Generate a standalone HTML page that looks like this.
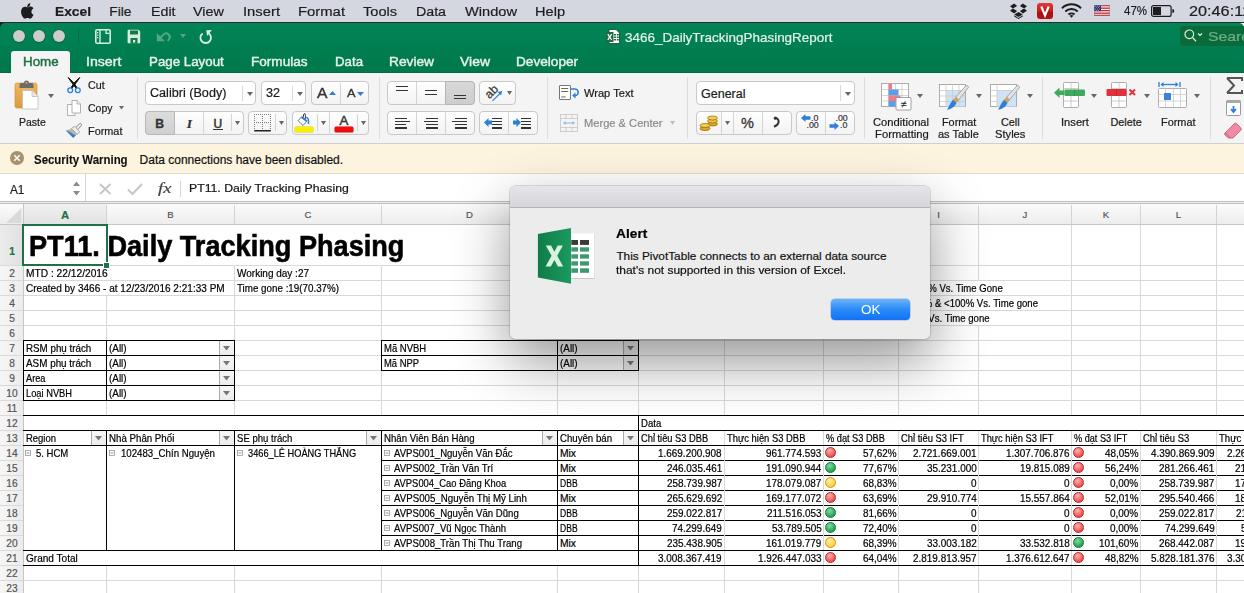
<!DOCTYPE html>
<html><head><meta charset="utf-8"><style>
html,body{margin:0;padding:0;}
body{width:1244px;height:593px;overflow:hidden;position:relative;background:#fff;font-family:"Liberation Sans", sans-serif;}
svg{position:absolute;overflow:visible;}
</style></head><body>
<div style="position:absolute;left:0px;top:0px;width:1244px;height:22px;background:#d4d7df;"></div>
<div style="position:absolute;left:0px;top:22px;width:1244px;height:1px;background:#2b2b2b;"></div>
<svg style="left:20px;top:3px" width="15" height="17" viewBox="0 0 170 200"><path fill="#1d1d1f" d="M150 68c-1 1-19 11-19 34 0 26 23 35 24 35 0 1-4 13-12 25-8 11-16 22-28 22s-15-7-29-7c-14 0-19 7-30 7-11 0-19-10-28-23C18 146 9 122 9 99c0-37 24-56 47-56 12 0 23 8 30 8 7 0 19-9 33-9 5 0 24 0 37 19zM107 34c6-7 10-16 10-26 0-1 0-3 0-4-10 0-21 7-27 14-5 6-10 15-10 25 0 1 0 3 0 3 1 0 2 0 3 0 9 0 19-6 24-12z"/></svg>
<div style="position:absolute;left:54.50px;top:5.00px;font-size:13.7px;line-height:1;font-weight:bold;color:#1d1d1f;white-space:pre;-webkit-text-stroke:0.2px #1d1d1f;transform:scaleX(1.0065);transform-origin:0 0;">Excel</div>
<div style="position:absolute;left:109.30px;top:5.00px;font-size:13.7px;line-height:1;color:#1d1d1f;white-space:pre;-webkit-text-stroke:0.2px #1d1d1f;">File</div>
<div style="position:absolute;left:150.50px;top:5.00px;font-size:13.7px;line-height:1;color:#1d1d1f;white-space:pre;-webkit-text-stroke:0.2px #1d1d1f;transform:scaleX(1.0388);transform-origin:0 0;">Edit</div>
<div style="position:absolute;left:193.40px;top:5.00px;font-size:13.7px;line-height:1;color:#1d1d1f;white-space:pre;-webkit-text-stroke:0.2px #1d1d1f;transform:scaleX(1.0537);transform-origin:0 0;">View</div>
<div style="position:absolute;left:243.00px;top:5.00px;font-size:13.7px;line-height:1;color:#1d1d1f;white-space:pre;-webkit-text-stroke:0.2px #1d1d1f;transform:scaleX(1.0809);transform-origin:0 0;">Insert</div>
<div style="position:absolute;left:298.40px;top:5.00px;font-size:13.7px;line-height:1;color:#1d1d1f;white-space:pre;-webkit-text-stroke:0.2px #1d1d1f;transform:scaleX(1.0842);transform-origin:0 0;">Format</div>
<div style="position:absolute;left:363.00px;top:5.00px;font-size:13.7px;line-height:1;color:#1d1d1f;white-space:pre;-webkit-text-stroke:0.2px #1d1d1f;transform:scaleX(1.0641);transform-origin:0 0;">Tools</div>
<div style="position:absolute;left:416.00px;top:5.00px;font-size:13.7px;line-height:1;color:#1d1d1f;white-space:pre;-webkit-text-stroke:0.2px #1d1d1f;transform:scaleX(1.0376);transform-origin:0 0;">Data</div>
<div style="position:absolute;left:465.00px;top:5.00px;font-size:13.7px;line-height:1;color:#1d1d1f;white-space:pre;-webkit-text-stroke:0.2px #1d1d1f;transform:scaleX(1.0682);transform-origin:0 0;">Window</div>
<div style="position:absolute;left:535.00px;top:5.00px;font-size:13.7px;line-height:1;color:#1d1d1f;white-space:pre;-webkit-text-stroke:0.2px #1d1d1f;transform:scaleX(1.0657);transform-origin:0 0;">Help</div>
<svg style="left:1010px;top:3px" width="17" height="16" viewBox="0 0 17 16"><g fill="#1d1d1f"><path d="M4.2 0.5L0 3.2 2.9 5.5 7.1 3 z"/><path d="M12.8 0.5L17 3.2 14.1 5.5 9.9 3 z"/><path d="M0 7.8L4.2 10.5 7.1 8 2.9 5.5z"/><path d="M17 7.8L12.8 10.5 9.9 8 14.1 5.5z"/><path d="M4.3 11.4L8.5 14 12.7 11.4 8.5 8.9z"/><path d="M4.2 12.3v1.2l4.3 2.5 4.3-2.5v-1.2l-4.3 2.6z"/></g></svg>
<div style="position:absolute;left:1037px;top:3px;width:16px;height:16px;background:linear-gradient(#e23a3a,#c21a1a 55%,#a80f0f 56%,#b51515);border-radius:3px;"></div>
<svg style="left:1037px;top:3px" width="16" height="16" viewBox="0 0 16 16"><path d="M4.3 3.5L8 12.5 11.7 3.5" stroke="#fff" stroke-width="2.1" fill="none"/></svg>
<svg style="left:1061px;top:3px" width="21" height="15" viewBox="0 0 21 15"><g fill="none" stroke="#1d1d1f" stroke-width="2" stroke-linecap="butt"><path d="M1 5.2A13.5 13.5 0 0 1 20 5.2"/><path d="M4.3 8.5A9 9 0 0 1 16.7 8.5"/><path d="M7.5 11.6A4.4 4.4 0 0 1 13.5 11.6"/></g><path d="M8.6 12.8L10.5 14.8 12.4 12.8A2.8 2.8 0 0 0 8.6 12.8z" fill="#1d1d1f"/></svg>
<svg style="left:1094px;top:5px" width="16" height="11" viewBox="0 0 16 11"><rect width="16" height="11" fill="#fff"/><g fill="#c8202a"><rect y="0" width="16" height="1.3"/><rect y="2.5" width="16" height="1.3"/><rect y="5" width="16" height="1.3"/><rect y="7.5" width="16" height="1.3"/><rect y="9.7" width="16" height="1.3"/></g><rect width="7" height="6.2" fill="#2b2f6e"/><g fill="#fff"><circle cx="1.3" cy="1.2" r=".45"/><circle cx="3.3" cy="1.2" r=".45"/><circle cx="5.3" cy="1.2" r=".45"/><circle cx="2.3" cy="2.6" r=".45"/><circle cx="4.3" cy="2.6" r=".45"/><circle cx="1.3" cy="4" r=".45"/><circle cx="3.3" cy="4" r=".45"/><circle cx="5.3" cy="4" r=".45"/><circle cx="2.3" cy="5.3" r=".45"/><circle cx="4.3" cy="5.3" r=".45"/></g><rect x=".25" y=".25" width="15.5" height="10.5" fill="none" stroke="#888" stroke-width=".5"/></svg>
<div style="position:absolute;left:1123.50px;top:5.00px;font-size:12.8px;line-height:1;color:#1d1d1f;white-space:pre;-webkit-text-stroke:0.2px #1d1d1f;transform:scaleX(0.8980);transform-origin:0 0;">47%</div>
<svg style="left:1151px;top:5px" width="24" height="12" viewBox="0 0 24 12"><rect x="0.6" y="0.6" width="19.5" height="10.8" rx="2" fill="none" stroke="#1d1d1f" stroke-width="1.2"/><rect x="2" y="2" width="8" height="8" fill="#1d1d1f"/><path d="M21.3 4v4a2 2 0 0 0 0-4z" fill="#1d1d1f"/></svg>
<div style="position:absolute;left:1188.70px;top:4.00px;font-size:14px;line-height:1;color:#1d1d1f;white-space:pre;-webkit-text-stroke:0.2px #1d1d1f;transform:scaleX(1.1598);transform-origin:0 0;">20:46:11</div>
<div style="position:absolute;left:0px;top:23px;width:8px;height:8px;background:#1a1a1a;"></div>
<div style="position:absolute;left:0px;top:23px;width:1244px;height:50px;background:linear-gradient(#018457,#00784b);border-radius:5px 5px 0 0;"></div>
<div style="position:absolute;left:0px;top:72px;width:1244px;height:1px;background:#006a40;"></div>
<div style="position:absolute;left:13px;top:30px;width:12px;height:12px;background:#cccccc;border-radius:50%;box-shadow:0 0 0 .6px rgba(0,60,30,.5);"></div>
<div style="position:absolute;left:33px;top:30px;width:12px;height:12px;background:#cccccc;border-radius:50%;box-shadow:0 0 0 .6px rgba(0,60,30,.5);"></div>
<div style="position:absolute;left:53px;top:30px;width:12px;height:12px;background:#cccccc;border-radius:50%;box-shadow:0 0 0 .6px rgba(0,60,30,.5);"></div>
<div style="position:absolute;left:78px;top:28px;width:1px;height:16px;background:rgba(0,0,0,0.12);"></div>
<svg style="left:95px;top:29px" width="16" height="15" viewBox="0 0 16 15"><rect x=".8" y=".8" width="14.4" height="13.4" rx="1.3" fill="none" stroke="#d9ece0" stroke-width="1.6"/><rect x="4.3" y="1" width="1.4" height="13" fill="#d9ece0"/><g fill="#d9ece0"><rect x="2" y="3" width="1.3" height="1.2"/><rect x="2" y="5.5" width="1.3" height="1.2"/><rect x="2" y="8" width="1.3" height="1.2"/></g><path d="M11 1v3.3h3.3" fill="none" stroke="#d9ece0" stroke-width="1.3"/></svg>
<svg style="left:127px;top:29px" width="14" height="15" viewBox="0 0 14 15"><path d="M1.5 .8h10l1.7 1.7v11a.8.8 0 0 1-.8.8h-11a.8.8 0 0 1-.8-.8v-12a.8.8 0 0 1 .9-.7z" fill="#d9ece0"/><rect x="3" y="1.5" width="8" height="4" fill="#0e7d45"/><rect x="3.5" y="9" width="7" height="5.5" fill="#0e7d45"/><rect x="6" y="11" width="2.2" height="2.5" fill="#d9ece0"/></svg>
<svg style="left:156px;top:31px" width="15" height="12" viewBox="0 0 15 12"><path d="M4.5 6.5L7.5 3.6a3.6 3.6 0 0 1 5.6 4.5L11.8 10" fill="none" stroke="#56a882" stroke-width="1.9"/><path d="M.8 2v8.2h8.2z" fill="#56a882"/></svg>
<svg style="left:180px;top:34px" width="6" height="4" viewBox="0 0 6 4"><path d="M0 0h6L3 4z" fill="#5ba37c"/></svg>
<svg style="left:199px;top:29px" width="15" height="16" viewBox="0 0 15 16"><path d="M3.6 4.4A5.3 5.3 0 1 0 9.5 4.2" fill="none" stroke="#dcede3" stroke-width="1.8"/><path d="M7.3 1.2L12.9 1 8 6.9z" fill="#dcede3"/></svg>
<svg style="left:606px;top:29px" width="14" height="15" viewBox="0 0 14 15"><path d="M3 .5h7l3.5 3.5v10.5h-10.5z" fill="#fff" stroke="#0a4a2a" stroke-width=".8"/><g fill="#217346"><rect x="8" y="5" width="2" height="1.5"/><rect x="10.8" y="5" width="2" height="1.5"/><rect x="8" y="7.5" width="2" height="1.5"/><rect x="10.8" y="7.5" width="2" height="1.5"/><rect x="8" y="10" width="2" height="1.5"/><rect x="10.8" y="10" width="2" height="1.5"/></g><path d="M0 3h7.5v10h-7.5z" fill="#1d6b40"/><path d="M1.8 5.2l3.8 5.6M5.6 5.2l-3.8 5.6" stroke="#fff" stroke-width="1.2"/></svg>
<div style="position:absolute;left:624.50px;top:31.00px;font-size:13px;line-height:1;color:#e6f1ea;white-space:pre;-webkit-text-stroke:0.2px #e6f1ea;transform:scaleX(1.0354);transform-origin:0 0;">3466_DailyTrackingPhasingReport</div>
<div style="position:absolute;left:1180px;top:26px;width:70px;height:20px;background:#0a6a3a;border-radius:3px;"></div>
<svg style="left:1184px;top:29px" width="20" height="14" viewBox="0 0 20 14"><circle cx="5.3" cy="5.3" r="4.3" fill="none" stroke="#dfeee5" stroke-width="1.2"/><path d="M8.4 8.4l3.6 3.8" stroke="#dfeee5" stroke-width="1.3"/><path d="M14 4.5l2 2 2-2" fill="none" stroke="#dfeee5" stroke-width="1.1"/></svg>
<div style="position:absolute;left:1208.00px;top:30.00px;font-size:13px;line-height:1;color:#6fae8a;white-space:pre;-webkit-text-stroke:0.2px #6fae8a;transform:scaleX(1.2139);transform-origin:0 0;">Search</div>
<div style="position:absolute;left:11px;top:51px;width:59px;height:22px;background:#f4f4f4;border-radius:3px 3px 0 0;"></div>
<div style="position:absolute;left:22.60px;top:55.00px;font-size:13px;line-height:1;color:#1e7145;white-space:pre;-webkit-text-stroke:0.2px #1e7145;transform:scaleX(1.0266);transform-origin:0 0;-webkit-text-stroke:0.45px #1e7145;">Home</div>
<div style="position:absolute;left:85.50px;top:55.00px;font-size:13px;line-height:1;color:#e7f1eb;white-space:pre;-webkit-text-stroke:0.2px #e7f1eb;transform:scaleX(1.0857);transform-origin:0 0;-webkit-text-stroke:0.4px #e7f1eb;">Insert</div>
<div style="position:absolute;left:148.70px;top:55.00px;font-size:13px;line-height:1;color:#e7f1eb;white-space:pre;-webkit-text-stroke:0.2px #e7f1eb;transform:scaleX(1.0246);transform-origin:0 0;-webkit-text-stroke:0.4px #e7f1eb;">Page Layout</div>
<div style="position:absolute;left:251.40px;top:55.00px;font-size:13px;line-height:1;color:#e7f1eb;white-space:pre;-webkit-text-stroke:0.2px #e7f1eb;transform:scaleX(1.0447);transform-origin:0 0;-webkit-text-stroke:0.4px #e7f1eb;">Formulas</div>
<div style="position:absolute;left:335.40px;top:55.00px;font-size:13px;line-height:1;color:#e7f1eb;white-space:pre;-webkit-text-stroke:0.2px #e7f1eb;transform:scaleX(1.0197);transform-origin:0 0;-webkit-text-stroke:0.4px #e7f1eb;">Data</div>
<div style="position:absolute;left:389.00px;top:55.00px;font-size:13px;line-height:1;color:#e7f1eb;white-space:pre;-webkit-text-stroke:0.2px #e7f1eb;transform:scaleX(1.0557);transform-origin:0 0;-webkit-text-stroke:0.4px #e7f1eb;">Review</div>
<div style="position:absolute;left:460.10px;top:55.00px;font-size:13px;line-height:1;color:#e7f1eb;white-space:pre;-webkit-text-stroke:0.2px #e7f1eb;transform:scaleX(1.0736);transform-origin:0 0;-webkit-text-stroke:0.4px #e7f1eb;">View</div>
<div style="position:absolute;left:516.40px;top:55.00px;font-size:13px;line-height:1;color:#e7f1eb;white-space:pre;-webkit-text-stroke:0.2px #e7f1eb;transform:scaleX(1.0480);transform-origin:0 0;-webkit-text-stroke:0.4px #e7f1eb;">Developer</div>
<div style="position:absolute;left:0px;top:73px;width:1244px;height:70px;background:#f4f4f4;"></div>
<div style="position:absolute;left:0px;top:143px;width:1244px;height:1px;background:#cfcfcf;"></div>
<div style="position:absolute;left:137px;top:77px;width:1px;height:62px;background:#dcdcdc;"></div>
<div style="position:absolute;left:379px;top:77px;width:1px;height:62px;background:#dcdcdc;"></div>
<div style="position:absolute;left:547px;top:77px;width:1px;height:62px;background:#dcdcdc;"></div>
<div style="position:absolute;left:687px;top:77px;width:1px;height:62px;background:#dcdcdc;"></div>
<div style="position:absolute;left:864px;top:77px;width:1px;height:62px;background:#dcdcdc;"></div>
<div style="position:absolute;left:1042px;top:77px;width:1px;height:62px;background:#dcdcdc;"></div>
<div style="position:absolute;left:1210px;top:77px;width:1px;height:62px;background:#dcdcdc;"></div>
<svg style="left:14px;top:79px" width="26" height="32" viewBox="0 0 26 32">
<defs><linearGradient id="cbg" x1="0" y1="0" x2="0" y2="1"><stop offset="0" stop-color="#f0b860"/><stop offset="1" stop-color="#dc9a3c"/></linearGradient></defs>
<rect x="1" y="4" width="22" height="25" rx="2" fill="url(#cbg)" stroke="#c98a30" stroke-width=".6"/>
<path d="M5.5 9v-3a2 2 0 0 1 2-2h2.5a2.5 2.5 0 0 1 5 0h2.5a2 2 0 0 1 2 2v3z" fill="#6b6b6b"/>
<circle cx="12.5" cy="4" r="1" fill="#e0a850"/>
<path d="M8.5 11.5h9.5l6 6v12.5h-15.5z" fill="#fff" stroke="#bdbdbd" stroke-width=".8"/>
<path d="M18 11.5v6h6" fill="#e8e8e8" stroke="#bdbdbd" stroke-width=".8"/>
</svg>
<svg style="left:48px;top:94px" width="6" height="4" viewBox="0 0 6 4"><path d="M0 0h6L3 4z" fill="#666"/></svg>
<div style="position:absolute;left:18.70px;top:117.00px;font-size:10.8px;line-height:1;color:#1a1a1a;white-space:pre;-webkit-text-stroke:0.2px #1a1a1a;transform:scaleX(0.9707);transform-origin:0 0;">Paste</div>
<svg style="left:66px;top:76px" width="16" height="18" viewBox="0 0 16 18">
<path d="M2.2 1.5Q5 6 10 12.2L11 11.5Q7 5 2.2 1.5z" fill="#111" stroke="#111" stroke-width="1"/>
<path d="M13.8 1.5Q11 6 6 12.2L5 11.5Q9 5 13.8 1.5z" fill="#111" stroke="#111" stroke-width="1"/>
<circle cx="4.2" cy="14.3" r="2.4" fill="none" stroke="#2a7fd8" stroke-width="1.3"/>
<circle cx="11.8" cy="14.3" r="2.4" fill="none" stroke="#2a7fd8" stroke-width="1.3"/>
</svg>
<div style="position:absolute;left:87.50px;top:80.00px;font-size:10.8px;line-height:1;color:#1a1a1a;white-space:pre;-webkit-text-stroke:0.2px #1a1a1a;transform:scaleX(0.9880);transform-origin:0 0;">Cut</div>
<svg style="left:66px;top:99px" width="16" height="18" viewBox="0 0 16 18">
<path d="M1.5 5.5h5l2.5 2.5v8.5h-7.5z" fill="#fff" stroke="#a8a8a8" stroke-width=".9"/>
<path d="M6 1.5h5l3.5 3.5v9h-8.5z" fill="#fff" stroke="#a8a8a8" stroke-width=".9"/>
<path d="M11 1.5v3.5h3.5" fill="#eee" stroke="#a8a8a8" stroke-width=".9"/>
</svg>
<div style="position:absolute;left:87.50px;top:103.00px;font-size:10.8px;line-height:1;color:#1a1a1a;white-space:pre;-webkit-text-stroke:0.2px #1a1a1a;transform:scaleX(0.9760);transform-origin:0 0;">Copy</div>
<svg style="left:119px;top:106px" width="5" height="4" viewBox="0 0 5 4"><path d="M0 0h5L2.5 3.6z" fill="#666"/></svg>
<svg style="left:64px;top:121px" width="20" height="19" viewBox="0 0 20 19">
<path d="M16.2 3.9L12.8 7.6" stroke="#8a8a8a" stroke-width="3.4" stroke-linecap="round"/>
<path d="M16.2 3.9L12.8 7.6" stroke="#efefef" stroke-width="2" stroke-linecap="round"/>
<path d="M7.4 7.4L10.6 5.1 15.8 10.8 13.3 13.4z" fill="#ececec" stroke="#8a8a8a" stroke-width=".7"/>
<path d="M2.6 9.4L7.4 7.4 13.3 13.4 11.6 14.8z" fill="#c7b29a"/>
<path d="M2 9.8L2.8 9.2 11.8 14.6 9.2 17z" fill="#2f80d6"/>
</svg>
<div style="position:absolute;left:87.50px;top:126.00px;font-size:10.8px;line-height:1;color:#1a1a1a;white-space:pre;-webkit-text-stroke:0.2px #1a1a1a;transform:scaleX(1.0060);transform-origin:0 0;">Format</div>
<div style="position:absolute;left:145px;top:81px;width:111px;height:24px;background:#fff;border:1px solid #c9c9c9;border-radius:4px;box-sizing:border-box;"></div>
<div style="position:absolute;left:242px;top:86px;width:1px;height:15px;background:#dadada;"></div>
<svg style="left:246.5px;top:92px" width="6" height="4" viewBox="0 0 6 4"><path d="M0 0h6L3.0 4z" fill="#666"/></svg>
<div style="position:absolute;left:150.10px;top:87.00px;font-size:12.3px;line-height:1;color:#1a1a1a;white-space:pre;-webkit-text-stroke:0.2px #1a1a1a;transform:scaleX(1.0257);transform-origin:0 0;">Calibri (Body)</div>
<div style="position:absolute;left:261px;top:81px;width:45px;height:24px;background:#fff;border:1px solid #c9c9c9;border-radius:4px;box-sizing:border-box;"></div>
<div style="position:absolute;left:292px;top:86px;width:1px;height:15px;background:#dadada;"></div>
<svg style="left:296.5px;top:92px" width="6" height="4" viewBox="0 0 6 4"><path d="M0 0h6L3.0 4z" fill="#666"/></svg>
<div style="position:absolute;left:266.30px;top:87.00px;font-size:12.3px;line-height:1;color:#1a1a1a;white-space:pre;-webkit-text-stroke:0.2px #1a1a1a;transform:scaleX(1.0235);transform-origin:0 0;">32</div>
<div style="position:absolute;left:311px;top:81px;width:58px;height:24px;background:linear-gradient(#fefefe,#f3f3f3);border:1px solid #c9c9c9;border-radius:4px;box-sizing:border-box;"></div>
<div style="position:absolute;left:340px;top:83px;width:1px;height:21px;background:#d4d4d4;"></div>
<div style="position:absolute;left:316.50px;top:86.00px;font-size:14px;line-height:1;color:#333;white-space:pre;-webkit-text-stroke:0.2px #333;transform:scaleX(1.1245);transform-origin:0 0;-webkit-text-stroke:0.35px #333;">A</div>
<svg style="left:329px;top:91px" width="7" height="4" viewBox="0 0 7 4"><path d="M0 4h7L3.5 0z" fill="#2d7fd8"/></svg>
<div style="position:absolute;left:346.50px;top:88.00px;font-size:11.8px;line-height:1;color:#333;white-space:pre;-webkit-text-stroke:0.2px #333;transform:scaleX(1.0803);transform-origin:0 0;-webkit-text-stroke:0.3px #333;">A</div>
<svg style="left:357px;top:92px" width="7" height="4" viewBox="0 0 7 4"><path d="M0 0h7L3.5 4z" fill="#2d7fd8"/></svg>
<div style="position:absolute;left:145px;top:111px;width:99px;height:24px;background:linear-gradient(#fefefe,#f3f3f3);border:1px solid #c9c9c9;border-radius:4px;box-sizing:border-box;"></div>
<div style="position:absolute;left:145px;top:111px;width:30px;height:24px;background:linear-gradient(#dcdcdc,#d0d0d0);border:1px solid #b8b8b8;border-radius:4px 0 0 4px;box-sizing:border-box;"></div>
<div style="position:absolute;left:203px;top:112px;width:1px;height:22px;background:#d4d4d4;"></div>
<div style="position:absolute;left:231px;top:114px;width:1px;height:17px;background:#d4d4d4;"></div>
<div style="position:absolute;left:155.30px;top:118.00px;font-size:12.2px;line-height:1;font-weight:bold;color:#333;white-space:pre;-webkit-text-stroke:0.2px #333;-webkit-text-stroke:0.3px #333;">B</div>
<div style="position:absolute;left:186.82px;top:117.00px;font-size:13.5px;line-height:1;font-weight:bold;color:#333;white-space:pre;-webkit-text-stroke:0.2px #333;font-family:'Liberation Serif',serif;font-style:italic;">I</div>
<div style="position:absolute;left:213.47px;top:118.00px;font-size:12px;line-height:1;color:#333;white-space:pre;-webkit-text-stroke:0.2px #333;-webkit-text-stroke:0.5px #333;">U</div>
<div style="position:absolute;left:213px;top:129px;width:10px;height:1.2px;background:#333;"></div>
<svg style="left:235px;top:121px" width="5" height="4" viewBox="0 0 5 4"><path d="M0 0h5L2.5 4z" fill="#666"/></svg>
<div style="position:absolute;left:248px;top:111px;width:39px;height:24px;background:linear-gradient(#fefefe,#f3f3f3);border:1px solid #c9c9c9;border-radius:4px;box-sizing:border-box;"></div>
<div style="position:absolute;left:275px;top:114px;width:1px;height:17px;background:#d4d4d4;"></div>
<svg style="left:254px;top:114px" width="17" height="18" viewBox="0 0 17 18"><g fill="#7a7a7a"><rect x="0" y="0" width="1" height="1"/><rect x="0" y="2" width="1" height="1"/><rect x="0" y="4" width="1" height="1"/><rect x="0" y="6" width="1" height="1"/><rect x="0" y="8" width="1" height="1"/><rect x="0" y="10" width="1" height="1"/><rect x="0" y="12" width="1" height="1"/><rect x="0" y="14" width="1" height="1"/><rect x="2" y="0" width="1" height="1"/><rect x="2" y="8" width="1" height="1"/><rect x="4" y="0" width="1" height="1"/><rect x="4" y="8" width="1" height="1"/><rect x="6" y="0" width="1" height="1"/><rect x="6" y="8" width="1" height="1"/><rect x="8" y="0" width="1" height="1"/><rect x="8" y="2" width="1" height="1"/><rect x="8" y="4" width="1" height="1"/><rect x="8" y="6" width="1" height="1"/><rect x="8" y="8" width="1" height="1"/><rect x="8" y="10" width="1" height="1"/><rect x="8" y="12" width="1" height="1"/><rect x="8" y="14" width="1" height="1"/><rect x="10" y="0" width="1" height="1"/><rect x="10" y="8" width="1" height="1"/><rect x="12" y="0" width="1" height="1"/><rect x="12" y="8" width="1" height="1"/><rect x="14" y="0" width="1" height="1"/><rect x="14" y="8" width="1" height="1"/><rect x="16" y="0" width="1" height="1"/><rect x="16" y="2" width="1" height="1"/><rect x="16" y="4" width="1" height="1"/><rect x="16" y="6" width="1" height="1"/><rect x="16" y="8" width="1" height="1"/><rect x="16" y="10" width="1" height="1"/><rect x="16" y="12" width="1" height="1"/><rect x="16" y="14" width="1" height="1"/></g><rect x="0" y="16" width="17" height="1.5" rx=".7" fill="#222"/></svg>
<svg style="left:278.5px;top:121px" width="5" height="4" viewBox="0 0 5 4"><path d="M0 0h5L2.5 4z" fill="#666"/></svg>
<div style="position:absolute;left:292px;top:111px;width:77px;height:24px;background:linear-gradient(#fefefe,#f3f3f3);border:1px solid #c9c9c9;border-radius:4px;box-sizing:border-box;"></div>
<div style="position:absolute;left:317px;top:114px;width:1px;height:17px;background:#d4d4d4;"></div>
<div style="position:absolute;left:329px;top:112px;width:1px;height:22px;background:#d4d4d4;"></div>
<div style="position:absolute;left:357px;top:114px;width:1px;height:17px;background:#d4d4d4;"></div>
<svg style="left:295px;top:111px" width="17" height="16" viewBox="0 0 17 16"><path d="M3.1 9.7L8 14.5 11.9 10.2 6.4 6z" fill="#fff" stroke="#555" stroke-width=".8"/><path d="M6.4 6L11.9 10.2" stroke="#2d7fd8" stroke-width="1.7"/><path d="M8.2 6.5Q8.3 2 9.8 2.5Q10.8 3.2 10.3 8" fill="none" stroke="#222" stroke-width=".9"/><path d="M11.2 6.6Q14.2 6.8 13.4 13" fill="none" stroke="#2d7fd8" stroke-width="1.5"/></svg>
<div style="position:absolute;left:295px;top:127px;width:18px;height:5px;background:#f8f000;border-radius:1px;box-shadow:0 0 0 .5px #d8d000;"></div>
<svg style="left:320.5px;top:121px" width="5" height="4" viewBox="0 0 5 4"><path d="M0 0h5L2.5 4z" fill="#666"/></svg>
<div style="position:absolute;left:339.60px;top:114.00px;font-size:13.2px;line-height:1;color:#333;white-space:pre;-webkit-text-stroke:0.2px #333;-webkit-text-stroke:0.45px #333;">A</div>
<div style="position:absolute;left:335px;top:127px;width:18px;height:5px;background:#f00c0c;border-radius:1px;box-shadow:0 0 0 .5px #c00;"></div>
<svg style="left:360.5px;top:121px" width="5" height="4" viewBox="0 0 5 4"><path d="M0 0h5L2.5 4z" fill="#666"/></svg>
<div style="position:absolute;left:387px;top:81px;width:88px;height:24px;background:linear-gradient(#fefefe,#f3f3f3);border:1px solid #c9c9c9;border-radius:4px;box-sizing:border-box;"></div>
<div style="position:absolute;left:445px;top:81px;width:30px;height:24px;background:linear-gradient(#d8d8d8,#cdcdcd);border:1px solid #b5b5b5;border-radius:0 4px 4px 0;box-sizing:border-box;"></div>
<div style="position:absolute;left:416px;top:82px;width:1px;height:22px;background:#d4d4d4;"></div>
<div style="position:absolute;left:396px;top:86px;width:12px;height:1.3px;background:#333;"></div>
<div style="position:absolute;left:396px;top:89.5px;width:12px;height:1.3px;background:#333;"></div>
<div style="position:absolute;left:425px;top:90px;width:12px;height:1.3px;background:#333;"></div>
<div style="position:absolute;left:425px;top:93.5px;width:12px;height:1.3px;background:#333;"></div>
<div style="position:absolute;left:454px;top:94.5px;width:12px;height:1.3px;background:#333;"></div>
<div style="position:absolute;left:454px;top:98px;width:12px;height:1.3px;background:#333;"></div>
<div style="position:absolute;left:479px;top:81px;width:37px;height:24px;background:linear-gradient(#fefefe,#f3f3f3);border:1px solid #c9c9c9;border-radius:4px;box-sizing:border-box;"></div>
<svg style="left:482px;top:82px" width="24" height="22" viewBox="0 0 24 22"><text x="9.8" y="13.4" font-family="Liberation Sans" font-size="12" text-anchor="middle" fill="#333" stroke="#333" stroke-width=".25" transform="rotate(-45 9.8 10)">ab</text><path d="M10.5 18.8L18.5 11" stroke="#2d7fd8" stroke-width="1.1"/><path d="M20.2 9.1l-4.6 1 3.5 3.5z" fill="#2d7fd8"/></svg>
<svg style="left:507px;top:91px" width="5" height="4" viewBox="0 0 5 4"><path d="M0 0h5L2.5 4z" fill="#666"/></svg>
<div style="position:absolute;left:387px;top:111px;width:88px;height:24px;background:linear-gradient(#fefefe,#f3f3f3);border:1px solid #c9c9c9;border-radius:4px;box-sizing:border-box;"></div>
<div style="position:absolute;left:416px;top:112px;width:1px;height:22px;background:#d4d4d4;"></div>
<div style="position:absolute;left:445px;top:112px;width:1px;height:22px;background:#d4d4d4;"></div>
<div style="position:absolute;left:395px;top:117.5px;width:12px;height:1.2px;background:#333;"></div>
<div style="position:absolute;left:395px;top:120.8px;width:15px;height:1.2px;background:#333;"></div>
<div style="position:absolute;left:395px;top:124.1px;width:11px;height:1.2px;background:#333;"></div>
<div style="position:absolute;left:395px;top:127.4px;width:12px;height:1.2px;background:#333;"></div>
<div style="position:absolute;left:425.5px;top:117.5px;width:12px;height:1.2px;background:#333;"></div>
<div style="position:absolute;left:424px;top:120.8px;width:14px;height:1.2px;background:#333;"></div>
<div style="position:absolute;left:425.5px;top:124.1px;width:12px;height:1.2px;background:#333;"></div>
<div style="position:absolute;left:425.5px;top:127.4px;width:12px;height:1.2px;background:#333;"></div>
<div style="position:absolute;left:455px;top:117.5px;width:12px;height:1.2px;background:#333;"></div>
<div style="position:absolute;left:452px;top:120.8px;width:15px;height:1.2px;background:#333;"></div>
<div style="position:absolute;left:455px;top:124.1px;width:12px;height:1.2px;background:#333;"></div>
<div style="position:absolute;left:455px;top:127.4px;width:12px;height:1.2px;background:#333;"></div>
<div style="position:absolute;left:479px;top:111px;width:59px;height:24px;background:linear-gradient(#fefefe,#f3f3f3);border:1px solid #c9c9c9;border-radius:4px;box-sizing:border-box;"></div>
<div style="position:absolute;left:508px;top:112px;width:1px;height:22px;background:#d4d4d4;"></div>
<div style="position:absolute;left:492px;top:117.5px;width:10px;height:1.2px;background:#333;"></div>
<div style="position:absolute;left:492px;top:120.8px;width:10px;height:1.2px;background:#333;"></div>
<div style="position:absolute;left:492px;top:124.1px;width:10px;height:1.2px;background:#333;"></div>
<div style="position:absolute;left:492px;top:127.4px;width:10px;height:1.2px;background:#333;"></div>
<div style="position:absolute;left:521px;top:117.5px;width:10px;height:1.2px;background:#333;"></div>
<div style="position:absolute;left:521px;top:120.8px;width:10px;height:1.2px;background:#333;"></div>
<div style="position:absolute;left:521px;top:124.1px;width:10px;height:1.2px;background:#333;"></div>
<div style="position:absolute;left:521px;top:127.4px;width:10px;height:1.2px;background:#333;"></div>
<svg style="left:484px;top:117px" width="8" height="11" viewBox="0 0 8 11"><path d="M0 5.5L4.5 1v2.5h3.5v4h-3.5v2.5z" fill="#2d7fd8"/></svg>
<svg style="left:513px;top:117px" width="8" height="11" viewBox="0 0 8 11"><path d="M8 5.5L3.5 1v2.5h-3.5v4h3.5v2.5z" fill="#2d7fd8"/></svg>
<svg style="left:559px;top:85px" width="22" height="16" viewBox="0 0 22 16"><rect x=".5" y=".5" width="11" height="14" rx=".5" fill="#fff" stroke="#666" stroke-width=".9"/><g fill="#555"><rect x="2.2" y="3" width="7" height=".9"/><rect x="2.2" y="6" width="7" height=".9"/><rect x="2.2" y="11.5" width="4.5" height=".9"/></g><path d="M11.5 4h4.2a3.3 3.3 0 0 1 .3 6.6h-1.5" fill="none" stroke="#2d7fd8" stroke-width="1.6"/><path d="M13.2 10.6l3.3-3v6z" fill="#2d7fd8"/></svg>
<div style="position:absolute;left:584.30px;top:88.00px;font-size:11px;line-height:1;color:#1a1a1a;white-space:pre;-webkit-text-stroke:0.2px #1a1a1a;transform:scaleX(1.0079);transform-origin:0 0;">Wrap Text</div>
<svg style="left:560px;top:114px" width="18" height="18" viewBox="0 0 18 18"><g fill="none" stroke="#c9c9c9" stroke-width=".9"><rect x=".5" y=".5" width="17" height="17"/><path d="M.5 4.5h17M.5 13.5h17M6 .5v4M12 .5v4M6 13.5v4M12 13.5v4"/></g><path d="M4 9h10" stroke="#8fb8e8" stroke-width="1"/><path d="M3 9l2.5-2v4zM15 9l-2.5-2v4z" fill="#8fb8e8"/></svg>
<div style="position:absolute;left:584.30px;top:118.00px;font-size:11px;line-height:1;color:#8a8a8a;white-space:pre;-webkit-text-stroke:0.2px #8a8a8a;transform:scaleX(1.0110);transform-origin:0 0;">Merge &amp; Center</div>
<svg style="left:670px;top:121px" width="5" height="4" viewBox="0 0 5 4"><path d="M0 0h5L2.5 4z" fill="#bdbdbd"/></svg>
<div style="position:absolute;left:696px;top:81px;width:159px;height:24px;background:#fff;border:1px solid #c9c9c9;border-radius:4px;box-sizing:border-box;"></div>
<div style="position:absolute;left:840px;top:85px;width:1px;height:16px;background:#dadada;"></div>
<svg style="left:844.5px;top:92px" width="6" height="4" viewBox="0 0 6 4"><path d="M0 0h6L3.0 4z" fill="#666"/></svg>
<div style="position:absolute;left:701.00px;top:88.00px;font-size:12.5px;line-height:1;color:#1a1a1a;white-space:pre;-webkit-text-stroke:0.2px #1a1a1a;">General</div>
<div style="position:absolute;left:696px;top:111px;width:96px;height:24px;background:linear-gradient(#fefefe,#f3f3f3);border:1px solid #c9c9c9;border-radius:4px;box-sizing:border-box;"></div>
<div style="position:absolute;left:721px;top:112px;width:1px;height:22px;background:#d4d4d4;"></div>
<div style="position:absolute;left:733px;top:112px;width:1px;height:22px;background:#d4d4d4;"></div>
<div style="position:absolute;left:762px;top:112px;width:1px;height:22px;background:#d4d4d4;"></div>
<svg style="left:699px;top:115px" width="20" height="17" viewBox="0 0 20 17">
<g stroke="#8a6410" stroke-width=".7"><ellipse cx="13.5" cy="9" rx="5" ry="2" fill="#e0a820"/><ellipse cx="13.5" cy="6" rx="5" ry="2" fill="#f0c040"/><ellipse cx="13.5" cy="3" rx="5" ry="2" fill="#f6d050"/>
<ellipse cx="6" cy="13.5" rx="5" ry="2" fill="#e0a820"/><ellipse cx="6" cy="10.5" rx="5" ry="2" fill="#f6d050"/></g></svg>
<svg style="left:724.5px;top:121px" width="5" height="4" viewBox="0 0 5 4"><path d="M0 0h5L2.5 4z" fill="#666"/></svg>
<div style="position:absolute;left:741.05px;top:116.00px;font-size:14.5px;line-height:1;color:#333;white-space:pre;-webkit-text-stroke:0.2px #333;-webkit-text-stroke:0.3px #333;">%</div>
<svg style="left:773px;top:116px" width="7" height="12" viewBox="0 0 7 12"><path d="M1.5 1.5c3.5.5 4.5 3 4 5s-2.5 3.5-4.5 4.3" fill="none" stroke="#333" stroke-width="2"/><circle cx="2.3" cy="2.3" r="1.5" fill="#333"/></svg>
<div style="position:absolute;left:796px;top:111px;width:59px;height:24px;background:linear-gradient(#fefefe,#f3f3f3);border:1px solid #c9c9c9;border-radius:4px;box-sizing:border-box;"></div>
<div style="position:absolute;left:825px;top:112px;width:1px;height:22px;background:#d4d4d4;"></div>
<div style="position:absolute;left:811.00px;top:114.00px;font-size:8.8px;line-height:1;color:#333;white-space:pre;-webkit-text-stroke:0.2px #333;">.0</div>
<div style="position:absolute;left:806.50px;top:121.00px;font-size:8.8px;line-height:1;color:#333;white-space:pre;-webkit-text-stroke:0.2px #333;">.00</div>
<svg style="left:801px;top:114px" width="10" height="8" viewBox="0 0 10 8"><path d="M0 4L4.5 0v2.3h5v3.4h-5v2.3z" fill="#2d7fd8"/></svg>
<div style="position:absolute;left:835.50px;top:114.00px;font-size:8.8px;line-height:1;color:#333;white-space:pre;-webkit-text-stroke:0.2px #333;">.00</div>
<div style="position:absolute;left:840.00px;top:121.00px;font-size:8.8px;line-height:1;color:#333;white-space:pre;-webkit-text-stroke:0.2px #333;">.0</div>
<svg style="left:829px;top:122px" width="10" height="8" viewBox="0 0 10 8"><path d="M10 4L5.5 0v2.3h-5v3.4h5v2.3z" fill="#2d7fd8"/></svg>
<svg style="left:881px;top:83px" width="32" height="28" viewBox="0 0 32 28">
<rect x=".5" y=".5" width="27" height="23" fill="#fff" stroke="#9a9a9a" stroke-width=".8"/>
<g stroke="#c4c4c4" stroke-width=".7"><path d="M7.5 .5v23M14.5 .5v23M21 .5v23M.5 6.5h27M.5 12.5h27M.5 18h27"/></g>
<rect x="7.5" y=".5" width="3.5" height="6" fill="#f07c86"/><rect x="7.5" y="6.5" width="10" height="6" fill="#5aa0e6"/><rect x="7.5" y="12.5" width="12" height="5.5" fill="#f07c86"/><rect x="7.5" y="18" width="7" height="5.5" fill="#5aa0e6"/>
<rect x="15" y="14.5" width="15" height="12.5" rx="1" fill="#fff" stroke="#8a8a8a" stroke-width=".8"/>
<text x="22.5" y="24.5" font-family="Liberation Sans" font-size="11" text-anchor="middle" fill="#222">&#8800;</text>
</svg>
<svg style="left:916.5px;top:94px" width="6" height="4" viewBox="0 0 6 4"><path d="M0 0h6L3.0 4z" fill="#666"/></svg>
<div style="position:absolute;left:873.40px;top:117.00px;font-size:10.8px;line-height:1;color:#1a1a1a;white-space:pre;-webkit-text-stroke:0.2px #1a1a1a;transform:scaleX(1.0385);transform-origin:0 0;">Conditional</div>
<div style="position:absolute;left:874.50px;top:129.00px;font-size:10.8px;line-height:1;color:#1a1a1a;white-space:pre;-webkit-text-stroke:0.2px #1a1a1a;transform:scaleX(1.0426);transform-origin:0 0;">Formatting</div>
<svg style="left:939px;top:84px" width="32" height="28" viewBox="0 0 32 28">
<rect x=".5" y=".5" width="26" height="22" fill="#fff" stroke="#9a9a9a" stroke-width=".8"/>
<rect x="7" y="6.5" width="19" height="16" fill="#cfe3f7"/>
<g stroke="#c4c4c4" stroke-width=".7"><path d="M7 .5v22M13.5 .5v22M20 .5v22M.5 6.5h26M.5 12h26M.5 17.5h26"/></g>
<path d="M29.5 3.5a1.8 1.8 0 0 0-2.8-1.5l-10 11 3 2.8z" fill="#e4e4e4" stroke="#8a8a8a" stroke-width=".7"/>
<path d="M16.5 13l3.3 3.2-2.3 2.5-3.5-2.8z" fill="#d9a050"/>
<path d="M14 15.8l3.5 2.9c-1.5 4-5 6.5-9.5 7 1.8-2 2-5 6-9.9z" fill="#2d7fd8"/>
</svg>
<svg style="left:990px;top:84px" width="32" height="28" viewBox="0 0 32 28">
<rect x=".5" y=".5" width="26" height="22" fill="#fff" stroke="#9a9a9a" stroke-width=".8"/>
<rect x="7" y="6.5" width="19" height="16" fill="#cfe3f7"/>
<g stroke="#c4c4c4" stroke-width=".7"><path d="M7 .5v22M.5 6.5h26M.5 12h6.5M.5 17.5h6.5"/></g>
<path d="M29.5 3.5a1.8 1.8 0 0 0-2.8-1.5l-10 11 3 2.8z" fill="#e4e4e4" stroke="#8a8a8a" stroke-width=".7"/>
<path d="M16.5 13l3.3 3.2-2.3 2.5-3.5-2.8z" fill="#d9a050"/>
<path d="M14 15.8l3.5 2.9c-1.5 4-5 6.5-9.5 7 1.8-2 2-5 6-9.9z" fill="#2d7fd8"/>
</svg>
<svg style="left:975.5px;top:94px" width="6" height="4" viewBox="0 0 6 4"><path d="M0 0h6L3.0 4z" fill="#666"/></svg>
<svg style="left:1026.5px;top:94px" width="6" height="4" viewBox="0 0 6 4"><path d="M0 0h6L3.0 4z" fill="#666"/></svg>
<div style="position:absolute;left:941.70px;top:117.00px;font-size:10.8px;line-height:1;color:#1a1a1a;white-space:pre;-webkit-text-stroke:0.2px #1a1a1a;transform:scaleX(1.0031);transform-origin:0 0;">Format</div>
<div style="position:absolute;left:938.00px;top:129.00px;font-size:10.8px;line-height:1;color:#1a1a1a;white-space:pre;-webkit-text-stroke:0.2px #1a1a1a;transform:scaleX(1.0195);transform-origin:0 0;">as Table</div>
<div style="position:absolute;left:1001.00px;top:117.00px;font-size:10.8px;line-height:1;color:#1a1a1a;white-space:pre;-webkit-text-stroke:0.2px #1a1a1a;">Cell</div>
<div style="position:absolute;left:995.00px;top:129.00px;font-size:10.8px;line-height:1;color:#1a1a1a;white-space:pre;-webkit-text-stroke:0.2px #1a1a1a;transform:scaleX(1.0340);transform-origin:0 0;">Styles</div>
<svg style="left:1053px;top:82px" width="34" height="28" viewBox="0 0 34 28">
<rect x="10.5" y=".5" width="15" height="25" rx="1" fill="#fff" stroke="#9a9a9a" stroke-width=".8"/>
<path d="M10.5 6.5h15M10.5 19h15M18 .5v25" stroke="#b9b9b9" stroke-width=".7"/>
<rect x="11.5" y="7.5" width="20.5" height="6.5" rx="1" fill="#3faa5c"/><path d="M21.5 7.5v6.5" stroke="#2a8a45" stroke-width=".7"/>
<path d="M1 10.8L6.5 5.5v3h5v4.6h-5v3z" fill="#3faa5c"/>
</svg>
<svg style="left:1091px;top:94px" width="6" height="4" viewBox="0 0 6 4"><path d="M0 0h6L3.0 4z" fill="#666"/></svg>
<div style="position:absolute;left:1060.50px;top:117.00px;font-size:10.8px;line-height:1;color:#1a1a1a;white-space:pre;-webkit-text-stroke:0.2px #1a1a1a;transform:scaleX(1.0332);transform-origin:0 0;">Insert</div>
<svg style="left:1106px;top:82px" width="34" height="28" viewBox="0 0 34 28">
<rect x="5.5" y=".5" width="15" height="25" rx="1" fill="#fff" stroke="#9a9a9a" stroke-width=".8"/>
<path d="M5.5 6.5h15M5.5 19h15M13 .5v25" stroke="#b9b9b9" stroke-width=".7"/>
<rect x=".5" y="7" width="20" height="7" rx="1" fill="#e0303c"/><path d="M10.5 7v7" stroke="#b81f2a" stroke-width=".7"/>
<path d="M23.5 7.5l5.5 5.5M29 7.5l-5.5 5.5" stroke="#e0303c" stroke-width="2"/>
</svg>
<svg style="left:1144px;top:94px" width="6" height="4" viewBox="0 0 6 4"><path d="M0 0h6L3.0 4z" fill="#666"/></svg>
<div style="position:absolute;left:1110.50px;top:117.00px;font-size:10.8px;line-height:1;color:#1a1a1a;white-space:pre;-webkit-text-stroke:0.2px #1a1a1a;">Delete</div>
<svg style="left:1158px;top:81px" width="32" height="30" viewBox="0 0 32 30">
<path d="M1 1v5M22 1v5" stroke="#2d7fd8" stroke-width="1.3"/><path d="M3.5 3.5h16" stroke="#2d7fd8" stroke-width="1.3"/><path d="M2.5 3.5l3-2.5v5zM20.5 3.5l-3-2.5v5z" fill="#2d7fd8"/>
<rect x=".5" y="7.5" width="28" height="19" rx="1" fill="#fff" stroke="#9a9a9a" stroke-width=".8"/>
<path d="M7.5 7.5v19M15.5 7.5v19M22.5 7.5v19M.5 13.5h28M.5 20h28" stroke="#c4c4c4" stroke-width=".7"/>
<rect x="6" y="12" width="7" height="7" rx=".5" fill="#3b82d8"/>
</svg>
<svg style="left:1193.5px;top:94px" width="6" height="4" viewBox="0 0 6 4"><path d="M0 0h6L3.0 4z" fill="#666"/></svg>
<div style="position:absolute;left:1160.50px;top:117.00px;font-size:10.8px;line-height:1;color:#1a1a1a;white-space:pre;-webkit-text-stroke:0.2px #1a1a1a;transform:scaleX(1.0090);transform-origin:0 0;">Format</div>
<svg style="left:1226px;top:77px" width="18" height="17" viewBox="0 0 18 17"><path d="M1 1h15v3M1 16h15v-3M1 1l7 7.5-7 7.5" fill="none" stroke="#555" stroke-width="2"/></svg>
<svg style="left:1226px;top:100px" width="18" height="17" viewBox="0 0 18 17"><rect x=".5" y=".5" width="14" height="15" rx="1" fill="#fff" stroke="#9a9a9a"/><rect x=".5" y=".5" width="14" height="2.5" fill="#aaa"/><path d="M7.5 6v5M5 9l2.5 3 2.5-3" fill="none" stroke="#2d7fd8" stroke-width="1.8"/></svg>
<svg style="left:1224px;top:122px" width="20" height="17" viewBox="0 0 20 17"><path d="M1 11l9-9a2 2 0 0 1 3 0l3.5 3.5a2 2 0 0 1 0 3l-7.5 7.5h-4.5l-3.5-3a1.5 1.5 0 0 1 0-2z" fill="#f08aa6" stroke="#c0506a" stroke-width=".8"/><path d="M1.5 11l5 5" stroke="#c0506a" stroke-width=".8"/></svg>
<div style="position:absolute;left:0px;top:144px;width:1244px;height:30px;background:#fdf4e0;"></div>
<div style="position:absolute;left:0px;top:173px;width:1244px;height:1px;background:#e2dccd;"></div>
<div style="position:absolute;left:10px;top:151px;width:14px;height:14px;background:#a8916f;border-radius:50%;"></div>
<svg style="left:10px;top:151px" width="14" height="14" viewBox="0 0 14 14"><path d="M4.3 4.3l5.4 5.4M9.7 4.3l-5.4 5.4" stroke="#fff" stroke-width="1.6"/></svg>
<div style="position:absolute;left:34.40px;top:154.00px;font-size:12px;line-height:1;font-weight:bold;color:#111;white-space:pre;-webkit-text-stroke:0.2px #111;transform:scaleX(0.9528);transform-origin:0 0;-webkit-text-stroke:0.1px #111;">Security Warning</div>
<div style="position:absolute;left:139.60px;top:154.00px;font-size:12px;line-height:1;color:#111;white-space:pre;-webkit-text-stroke:0.2px #111;">Data connections have been disabled.</div>
<div style="position:absolute;left:0px;top:174px;width:1244px;height:27px;background:#fff;"></div>
<div style="position:absolute;left:85px;top:174px;width:1px;height:27px;background:#d6d6d6;"></div>
<div style="position:absolute;left:10.00px;top:184.00px;font-size:12px;line-height:1;color:#222;white-space:pre;-webkit-text-stroke:0.2px #222;transform:scaleX(0.9811);transform-origin:0 0;">A1</div>
<svg style="left:73px;top:181px" width="8" height="15" viewBox="0 0 8 15"><path d="M0 5h7L3.5 .5z" fill="#8a8a8a"/><path d="M0 10h7L3.5 14.5z" fill="#8a8a8a"/></svg>
<svg style="left:99px;top:183px" width="13" height="12" viewBox="0 0 13 12"><path d="M1 1l10.5 10M11.5 1L1 11" stroke="#c6c6c6" stroke-width="1.9"/></svg>
<svg style="left:127px;top:183px" width="16" height="12" viewBox="0 0 16 12"><path d="M1 6.5l4.5 4.5L15 1" fill="none" stroke="#c6c6c6" stroke-width="2.1"/></svg>
<div style="position:absolute;left:158.30px;top:181.00px;font-size:15px;line-height:1;color:#444;white-space:pre;-webkit-text-stroke:0.2px #444;transform:scaleX(1.2428);transform-origin:0 0;font-family:'Liberation Serif',serif;font-style:italic;">fx</div>
<div style="position:absolute;left:180px;top:181px;width:1px;height:16px;background:#d6d6d6;"></div>
<div style="position:absolute;left:188.70px;top:183.00px;font-size:11.8px;line-height:1;color:#111;white-space:pre;-webkit-text-stroke:0.2px #111;transform:scaleX(1.0384);transform-origin:0 0;">PT11. Daily Tracking Phasing</div>
<div style="position:absolute;left:0px;top:201px;width:1244px;height:1px;background:#bdbdbd;"></div>
<div style="position:absolute;left:0px;top:202px;width:1244px;height:1px;background:#f0f0f0;"></div>
<div style="position:absolute;left:0px;top:203px;width:1244px;height:1px;background:#bdbdbd;"></div>
<div style="position:absolute;left:0px;top:204px;width:1244px;height:20px;background:linear-gradient(#fbfbfb,#ededed);"></div>
<div style="position:absolute;left:23px;top:204px;width:83px;height:20px;background:linear-gradient(#f1f1f1,#e2e2e2);"></div>
<div style="position:absolute;left:0px;top:224px;width:1244px;height:1px;background:#c6c6c6;"></div>
<div style="position:absolute;left:0px;top:225px;width:23px;height:368px;background:linear-gradient(90deg,#f6f6f6,#ececec);"></div>
<div style="position:absolute;left:0px;top:225px;width:23px;height:40px;background:linear-gradient(90deg,#ececec,#e0e0e0);"></div>
<div style="position:absolute;left:23px;top:204px;width:1px;height:389px;background:#c6c6c6;"></div>
<svg style="left:6px;top:208px" width="16" height="15" viewBox="0 0 16 15"><path d="M15.5 0v15h-15.5z" fill="#d9d9d9"/></svg>
<div style="position:absolute;left:60.96px;top:210.00px;font-size:11.2px;line-height:1;font-weight:bold;color:#1e7145;white-space:pre;-webkit-text-stroke:0.2px #1e7145;">A</div>
<div style="position:absolute;left:106px;top:205px;width:1px;height:19px;background:#d4d4d4;"></div>
<div style="position:absolute;left:167.30px;top:210.00px;font-size:9.6px;line-height:1;color:#555;white-space:pre;-webkit-text-stroke:0.2px #555;">B</div>
<div style="position:absolute;left:234px;top:205px;width:1px;height:19px;background:#d4d4d4;"></div>
<div style="position:absolute;left:304.54px;top:210.00px;font-size:9.6px;line-height:1;color:#555;white-space:pre;-webkit-text-stroke:0.2px #555;">C</div>
<div style="position:absolute;left:381px;top:205px;width:1px;height:19px;background:#d4d4d4;"></div>
<div style="position:absolute;left:466.04px;top:210.00px;font-size:9.6px;line-height:1;color:#555;white-space:pre;-webkit-text-stroke:0.2px #555;">D</div>
<div style="position:absolute;left:557px;top:205px;width:1px;height:19px;background:#d4d4d4;"></div>
<div style="position:absolute;left:594.80px;top:210.00px;font-size:9.6px;line-height:1;color:#555;white-space:pre;-webkit-text-stroke:0.2px #555;">E</div>
<div style="position:absolute;left:638px;top:205px;width:1px;height:19px;background:#d4d4d4;"></div>
<div style="position:absolute;left:678.57px;top:210.00px;font-size:9.6px;line-height:1;color:#555;white-space:pre;-webkit-text-stroke:0.2px #555;">F</div>
<div style="position:absolute;left:724px;top:205px;width:1px;height:19px;background:#d4d4d4;"></div>
<div style="position:absolute;left:770.27px;top:210.00px;font-size:9.6px;line-height:1;color:#555;white-space:pre;-webkit-text-stroke:0.2px #555;">G</div>
<div style="position:absolute;left:823px;top:205px;width:1px;height:19px;background:#d4d4d4;"></div>
<div style="position:absolute;left:857.54px;top:210.00px;font-size:9.6px;line-height:1;color:#555;white-space:pre;-webkit-text-stroke:0.2px #555;">H</div>
<div style="position:absolute;left:898px;top:205px;width:1px;height:19px;background:#d4d4d4;"></div>
<div style="position:absolute;left:937.17px;top:210.00px;font-size:9.6px;line-height:1;color:#555;white-space:pre;-webkit-text-stroke:0.2px #555;">I</div>
<div style="position:absolute;left:978px;top:205px;width:1px;height:19px;background:#d4d4d4;"></div>
<div style="position:absolute;left:1022.60px;top:210.00px;font-size:9.6px;line-height:1;color:#555;white-space:pre;-webkit-text-stroke:0.2px #555;">J</div>
<div style="position:absolute;left:1071px;top:205px;width:1px;height:19px;background:#d4d4d4;"></div>
<div style="position:absolute;left:1102.80px;top:210.00px;font-size:9.6px;line-height:1;color:#555;white-space:pre;-webkit-text-stroke:0.2px #555;">K</div>
<div style="position:absolute;left:1140px;top:205px;width:1px;height:19px;background:#d4d4d4;"></div>
<div style="position:absolute;left:1175.83px;top:210.00px;font-size:9.6px;line-height:1;color:#555;white-space:pre;-webkit-text-stroke:0.2px #555;">L</div>
<div style="position:absolute;left:1216px;top:205px;width:1px;height:19px;background:#d4d4d4;"></div>
<div style="position:absolute;left:1250.50px;top:210.00px;font-size:9.6px;line-height:1;color:#555;white-space:pre;-webkit-text-stroke:0.2px #555;">M</div>
<div style="position:absolute;left:0px;top:265px;width:23px;height:1px;background:#dadada;"></div>
<div style="position:absolute;left:9.17px;top:247.00px;font-size:10.2px;line-height:1;font-weight:bold;color:#217346;white-space:pre;-webkit-text-stroke:0.2px #217346;">1</div>
<div style="position:absolute;left:0px;top:280px;width:23px;height:1px;background:#dadada;"></div>
<div style="position:absolute;left:9.17px;top:269.00px;font-size:10.2px;line-height:1;color:#555;white-space:pre;-webkit-text-stroke:0.2px #555;">2</div>
<div style="position:absolute;left:0px;top:295px;width:23px;height:1px;background:#dadada;"></div>
<div style="position:absolute;left:9.17px;top:284.00px;font-size:10.2px;line-height:1;color:#555;white-space:pre;-webkit-text-stroke:0.2px #555;">3</div>
<div style="position:absolute;left:0px;top:310px;width:23px;height:1px;background:#dadada;"></div>
<div style="position:absolute;left:9.17px;top:299.00px;font-size:10.2px;line-height:1;color:#555;white-space:pre;-webkit-text-stroke:0.2px #555;">4</div>
<div style="position:absolute;left:0px;top:325px;width:23px;height:1px;background:#dadada;"></div>
<div style="position:absolute;left:9.17px;top:314.00px;font-size:10.2px;line-height:1;color:#555;white-space:pre;-webkit-text-stroke:0.2px #555;">5</div>
<div style="position:absolute;left:0px;top:340px;width:23px;height:1px;background:#dadada;"></div>
<div style="position:absolute;left:9.17px;top:329.00px;font-size:10.2px;line-height:1;color:#555;white-space:pre;-webkit-text-stroke:0.2px #555;">6</div>
<div style="position:absolute;left:0px;top:355px;width:23px;height:1px;background:#dadada;"></div>
<div style="position:absolute;left:9.17px;top:344.00px;font-size:10.2px;line-height:1;color:#555;white-space:pre;-webkit-text-stroke:0.2px #555;">7</div>
<div style="position:absolute;left:0px;top:370px;width:23px;height:1px;background:#dadada;"></div>
<div style="position:absolute;left:9.17px;top:359.00px;font-size:10.2px;line-height:1;color:#555;white-space:pre;-webkit-text-stroke:0.2px #555;">8</div>
<div style="position:absolute;left:0px;top:385px;width:23px;height:1px;background:#dadada;"></div>
<div style="position:absolute;left:9.17px;top:374.00px;font-size:10.2px;line-height:1;color:#555;white-space:pre;-webkit-text-stroke:0.2px #555;">9</div>
<div style="position:absolute;left:0px;top:400px;width:23px;height:1px;background:#dadada;"></div>
<div style="position:absolute;left:6.33px;top:389.00px;font-size:10.2px;line-height:1;color:#555;white-space:pre;-webkit-text-stroke:0.2px #555;">10</div>
<div style="position:absolute;left:0px;top:415px;width:23px;height:1px;background:#dadada;"></div>
<div style="position:absolute;left:6.71px;top:404.00px;font-size:10.2px;line-height:1;color:#555;white-space:pre;-webkit-text-stroke:0.2px #555;">11</div>
<div style="position:absolute;left:0px;top:430px;width:23px;height:1px;background:#dadada;"></div>
<div style="position:absolute;left:6.33px;top:419.00px;font-size:10.2px;line-height:1;color:#555;white-space:pre;-webkit-text-stroke:0.2px #555;">12</div>
<div style="position:absolute;left:0px;top:445px;width:23px;height:1px;background:#dadada;"></div>
<div style="position:absolute;left:6.33px;top:434.00px;font-size:10.2px;line-height:1;color:#555;white-space:pre;-webkit-text-stroke:0.2px #555;">13</div>
<div style="position:absolute;left:0px;top:460px;width:23px;height:1px;background:#dadada;"></div>
<div style="position:absolute;left:6.33px;top:449.00px;font-size:10.2px;line-height:1;color:#555;white-space:pre;-webkit-text-stroke:0.2px #555;">14</div>
<div style="position:absolute;left:0px;top:475px;width:23px;height:1px;background:#dadada;"></div>
<div style="position:absolute;left:6.33px;top:464.00px;font-size:10.2px;line-height:1;color:#555;white-space:pre;-webkit-text-stroke:0.2px #555;">15</div>
<div style="position:absolute;left:0px;top:490px;width:23px;height:1px;background:#dadada;"></div>
<div style="position:absolute;left:6.33px;top:479.00px;font-size:10.2px;line-height:1;color:#555;white-space:pre;-webkit-text-stroke:0.2px #555;">16</div>
<div style="position:absolute;left:0px;top:505px;width:23px;height:1px;background:#dadada;"></div>
<div style="position:absolute;left:6.33px;top:494.00px;font-size:10.2px;line-height:1;color:#555;white-space:pre;-webkit-text-stroke:0.2px #555;">17</div>
<div style="position:absolute;left:0px;top:520px;width:23px;height:1px;background:#dadada;"></div>
<div style="position:absolute;left:6.33px;top:509.00px;font-size:10.2px;line-height:1;color:#555;white-space:pre;-webkit-text-stroke:0.2px #555;">18</div>
<div style="position:absolute;left:0px;top:535px;width:23px;height:1px;background:#dadada;"></div>
<div style="position:absolute;left:6.33px;top:524.00px;font-size:10.2px;line-height:1;color:#555;white-space:pre;-webkit-text-stroke:0.2px #555;">19</div>
<div style="position:absolute;left:0px;top:550px;width:23px;height:1px;background:#dadada;"></div>
<div style="position:absolute;left:6.33px;top:539.00px;font-size:10.2px;line-height:1;color:#555;white-space:pre;-webkit-text-stroke:0.2px #555;">20</div>
<div style="position:absolute;left:0px;top:565px;width:23px;height:1px;background:#dadada;"></div>
<div style="position:absolute;left:6.33px;top:554.00px;font-size:10.2px;line-height:1;color:#555;white-space:pre;-webkit-text-stroke:0.2px #555;">21</div>
<div style="position:absolute;left:0px;top:580px;width:23px;height:1px;background:#dadada;"></div>
<div style="position:absolute;left:6.33px;top:569.00px;font-size:10.2px;line-height:1;color:#555;white-space:pre;-webkit-text-stroke:0.2px #555;">22</div>
<div style="position:absolute;left:0px;top:595px;width:23px;height:1px;background:#dadada;"></div>
<div style="position:absolute;left:6.33px;top:584.00px;font-size:10.2px;line-height:1;color:#555;white-space:pre;-webkit-text-stroke:0.2px #555;">23</div>
<div style="position:absolute;left:24px;top:265px;width:1220px;height:1px;background:#d8d8d8;"></div>
<div style="position:absolute;left:24px;top:280px;width:1220px;height:1px;background:#d8d8d8;"></div>
<div style="position:absolute;left:24px;top:295px;width:1220px;height:1px;background:#d8d8d8;"></div>
<div style="position:absolute;left:24px;top:310px;width:1220px;height:1px;background:#d8d8d8;"></div>
<div style="position:absolute;left:24px;top:325px;width:1220px;height:1px;background:#d8d8d8;"></div>
<div style="position:absolute;left:24px;top:340px;width:1220px;height:1px;background:#d8d8d8;"></div>
<div style="position:absolute;left:24px;top:355px;width:1220px;height:1px;background:#d8d8d8;"></div>
<div style="position:absolute;left:24px;top:370px;width:1220px;height:1px;background:#d8d8d8;"></div>
<div style="position:absolute;left:24px;top:385px;width:1220px;height:1px;background:#d8d8d8;"></div>
<div style="position:absolute;left:24px;top:400px;width:1220px;height:1px;background:#d8d8d8;"></div>
<div style="position:absolute;left:24px;top:415px;width:1220px;height:1px;background:#d8d8d8;"></div>
<div style="position:absolute;left:24px;top:430px;width:1220px;height:1px;background:#d8d8d8;"></div>
<div style="position:absolute;left:24px;top:445px;width:1220px;height:1px;background:#d8d8d8;"></div>
<div style="position:absolute;left:24px;top:460px;width:1220px;height:1px;background:#d8d8d8;"></div>
<div style="position:absolute;left:24px;top:475px;width:1220px;height:1px;background:#d8d8d8;"></div>
<div style="position:absolute;left:24px;top:490px;width:1220px;height:1px;background:#d8d8d8;"></div>
<div style="position:absolute;left:24px;top:505px;width:1220px;height:1px;background:#d8d8d8;"></div>
<div style="position:absolute;left:24px;top:520px;width:1220px;height:1px;background:#d8d8d8;"></div>
<div style="position:absolute;left:24px;top:535px;width:1220px;height:1px;background:#d8d8d8;"></div>
<div style="position:absolute;left:24px;top:550px;width:1220px;height:1px;background:#d8d8d8;"></div>
<div style="position:absolute;left:24px;top:565px;width:1220px;height:1px;background:#d8d8d8;"></div>
<div style="position:absolute;left:24px;top:580px;width:1220px;height:1px;background:#d8d8d8;"></div>
<div style="position:absolute;left:24px;top:595px;width:1220px;height:1px;background:#d8d8d8;"></div>
<div style="position:absolute;left:106px;top:225px;width:1px;height:368px;background:#d8d8d8;"></div>
<div style="position:absolute;left:234px;top:225px;width:1px;height:368px;background:#d8d8d8;"></div>
<div style="position:absolute;left:381px;top:225px;width:1px;height:368px;background:#d8d8d8;"></div>
<div style="position:absolute;left:557px;top:225px;width:1px;height:368px;background:#d8d8d8;"></div>
<div style="position:absolute;left:638px;top:225px;width:1px;height:368px;background:#d8d8d8;"></div>
<div style="position:absolute;left:724px;top:225px;width:1px;height:368px;background:#d8d8d8;"></div>
<div style="position:absolute;left:823px;top:225px;width:1px;height:368px;background:#d8d8d8;"></div>
<div style="position:absolute;left:898px;top:225px;width:1px;height:368px;background:#d8d8d8;"></div>
<div style="position:absolute;left:978px;top:225px;width:1px;height:368px;background:#d8d8d8;"></div>
<div style="position:absolute;left:1071px;top:225px;width:1px;height:368px;background:#d8d8d8;"></div>
<div style="position:absolute;left:1140px;top:225px;width:1px;height:368px;background:#d8d8d8;"></div>
<div style="position:absolute;left:1216px;top:225px;width:1px;height:368px;background:#d8d8d8;"></div>
<div style="position:absolute;left:1292px;top:225px;width:1px;height:368px;background:#d8d8d8;"></div>
<div style="position:absolute;left:24px;top:225px;width:533px;height:40px;background:#fff;"></div>
<div style="position:absolute;left:24px;top:225px;width:83px;height:40px;background:#fff;"></div>
<div style="position:absolute;left:105px;top:266px;width:3px;height:14px;background:#fff;"></div>
<div style="position:absolute;left:105px;top:281px;width:3px;height:14px;background:#fff;"></div>
<div style="position:absolute;left:977px;top:281px;width:3px;height:14px;background:#fff;"></div>
<div style="position:absolute;left:977px;top:296px;width:3px;height:14px;background:#fff;"></div>
<div style="position:absolute;left:977px;top:311px;width:3px;height:14px;background:#fff;"></div>
<div style="position:absolute;left:24px;top:416px;width:1220px;height:149px;background:#fff;"></div>
<div style="position:absolute;left:381px;top:460px;width:863px;height:1px;background:#000;"></div>
<div style="position:absolute;left:381px;top:475px;width:863px;height:1px;background:#000;"></div>
<div style="position:absolute;left:381px;top:490px;width:863px;height:1px;background:#000;"></div>
<div style="position:absolute;left:381px;top:505px;width:863px;height:1px;background:#000;"></div>
<div style="position:absolute;left:381px;top:520px;width:863px;height:1px;background:#000;"></div>
<div style="position:absolute;left:381px;top:535px;width:863px;height:1px;background:#000;"></div>
<div style="position:absolute;left:381px;top:550px;width:863px;height:1px;background:#000;"></div>
<div style="position:absolute;left:724px;top:431px;width:1px;height:134px;background:#d8d8d8;"></div>
<div style="position:absolute;left:823px;top:431px;width:1px;height:134px;background:#d8d8d8;"></div>
<div style="position:absolute;left:898px;top:431px;width:1px;height:134px;background:#d8d8d8;"></div>
<div style="position:absolute;left:978px;top:431px;width:1px;height:134px;background:#d8d8d8;"></div>
<div style="position:absolute;left:1071px;top:431px;width:1px;height:134px;background:#d8d8d8;"></div>
<div style="position:absolute;left:1140px;top:431px;width:1px;height:134px;background:#d8d8d8;"></div>
<div style="position:absolute;left:1216px;top:431px;width:1px;height:134px;background:#d8d8d8;"></div>
<div style="position:absolute;left:23px;top:415px;width:1221px;height:1px;background:#000;"></div>
<div style="position:absolute;left:23px;top:430px;width:1221px;height:1px;background:#000;"></div>
<div style="position:absolute;left:23px;top:445px;width:1221px;height:1px;background:#000;"></div>
<div style="position:absolute;left:23px;top:550px;width:1221px;height:1px;background:#000;"></div>
<div style="position:absolute;left:23px;top:565px;width:1221px;height:1px;background:#000;"></div>
<div style="position:absolute;left:106px;top:430px;width:1px;height:121px;background:#000;"></div>
<div style="position:absolute;left:234px;top:430px;width:1px;height:121px;background:#000;"></div>
<div style="position:absolute;left:381px;top:430px;width:1px;height:121px;background:#000;"></div>
<div style="position:absolute;left:557px;top:430px;width:1px;height:121px;background:#000;"></div>
<div style="position:absolute;left:638px;top:415px;width:1px;height:150px;background:#000;"></div>
<div style="position:absolute;left:23px;top:340px;width:212px;height:1px;background:#000;"></div>
<div style="position:absolute;left:23px;top:355px;width:212px;height:1px;background:#000;"></div>
<div style="position:absolute;left:23px;top:370px;width:212px;height:1px;background:#000;"></div>
<div style="position:absolute;left:23px;top:385px;width:212px;height:1px;background:#000;"></div>
<div style="position:absolute;left:23px;top:400px;width:212px;height:1px;background:#000;"></div>
<div style="position:absolute;left:23px;top:340px;width:1px;height:61px;background:#000;"></div>
<div style="position:absolute;left:106px;top:340px;width:1px;height:61px;background:#000;"></div>
<div style="position:absolute;left:234px;top:340px;width:1px;height:61px;background:#000;"></div>
<div style="position:absolute;left:381px;top:340px;width:258px;height:1px;background:#000;"></div>
<div style="position:absolute;left:381px;top:355px;width:258px;height:1px;background:#000;"></div>
<div style="position:absolute;left:381px;top:370px;width:258px;height:1px;background:#000;"></div>
<div style="position:absolute;left:381px;top:340px;width:1px;height:31px;background:#000;"></div>
<div style="position:absolute;left:557px;top:340px;width:1px;height:31px;background:#000;"></div>
<div style="position:absolute;left:638px;top:340px;width:1px;height:31px;background:#000;"></div>
<div style="position:absolute;left:219px;top:341px;width:15px;height:14px;background:linear-gradient(#f7f7f7,#ececec);border-left:1px solid #aaaaaa;box-sizing:border-box;"></div>
<svg style="left:223px;top:346px" width="7" height="5" viewBox="0 0 7 5"><path d="M0 0h7L3.5 4.5z" fill="#777"/></svg>
<div style="position:absolute;left:219px;top:356px;width:15px;height:14px;background:linear-gradient(#f7f7f7,#ececec);border-left:1px solid #aaaaaa;box-sizing:border-box;"></div>
<svg style="left:223px;top:361px" width="7" height="5" viewBox="0 0 7 5"><path d="M0 0h7L3.5 4.5z" fill="#777"/></svg>
<div style="position:absolute;left:219px;top:371px;width:15px;height:14px;background:linear-gradient(#f7f7f7,#ececec);border-left:1px solid #aaaaaa;box-sizing:border-box;"></div>
<svg style="left:223px;top:376px" width="7" height="5" viewBox="0 0 7 5"><path d="M0 0h7L3.5 4.5z" fill="#777"/></svg>
<div style="position:absolute;left:219px;top:386px;width:15px;height:14px;background:linear-gradient(#f7f7f7,#ececec);border-left:1px solid #aaaaaa;box-sizing:border-box;"></div>
<svg style="left:223px;top:391px" width="7" height="5" viewBox="0 0 7 5"><path d="M0 0h7L3.5 4.5z" fill="#777"/></svg>
<div style="position:absolute;left:623px;top:341px;width:15px;height:14px;background:linear-gradient(#f7f7f7,#ececec);border-left:1px solid #aaaaaa;box-sizing:border-box;"></div>
<svg style="left:627px;top:346px" width="7" height="5" viewBox="0 0 7 5"><path d="M0 0h7L3.5 4.5z" fill="#777"/></svg>
<div style="position:absolute;left:623px;top:356px;width:15px;height:14px;background:linear-gradient(#f7f7f7,#ececec);border-left:1px solid #aaaaaa;box-sizing:border-box;"></div>
<svg style="left:627px;top:361px" width="7" height="5" viewBox="0 0 7 5"><path d="M0 0h7L3.5 4.5z" fill="#777"/></svg>
<div style="position:absolute;left:91px;top:431px;width:15px;height:14px;background:linear-gradient(#f7f7f7,#ececec);border-left:1px solid #aaaaaa;box-sizing:border-box;"></div>
<svg style="left:95px;top:436px" width="7" height="5" viewBox="0 0 7 5"><path d="M0 0h7L3.5 4.5z" fill="#777"/></svg>
<div style="position:absolute;left:219px;top:431px;width:15px;height:14px;background:linear-gradient(#f7f7f7,#ececec);border-left:1px solid #aaaaaa;box-sizing:border-box;"></div>
<svg style="left:223px;top:436px" width="7" height="5" viewBox="0 0 7 5"><path d="M0 0h7L3.5 4.5z" fill="#777"/></svg>
<div style="position:absolute;left:366px;top:431px;width:15px;height:14px;background:linear-gradient(#f7f7f7,#ececec);border-left:1px solid #aaaaaa;box-sizing:border-box;"></div>
<svg style="left:370px;top:436px" width="7" height="5" viewBox="0 0 7 5"><path d="M0 0h7L3.5 4.5z" fill="#777"/></svg>
<div style="position:absolute;left:542px;top:431px;width:15px;height:14px;background:linear-gradient(#f7f7f7,#ececec);border-left:1px solid #aaaaaa;box-sizing:border-box;"></div>
<svg style="left:546px;top:436px" width="7" height="5" viewBox="0 0 7 5"><path d="M0 0h7L3.5 4.5z" fill="#777"/></svg>
<div style="position:absolute;left:623px;top:431px;width:15px;height:14px;background:linear-gradient(#f7f7f7,#ececec);border-left:1px solid #aaaaaa;box-sizing:border-box;"></div>
<svg style="left:627px;top:436px" width="7" height="5" viewBox="0 0 7 5"><path d="M0 0h7L3.5 4.5z" fill="#777"/></svg>
<div style="position:absolute;left:29.30px;top:232.00px;font-size:28.6px;line-height:1;font-weight:bold;color:#000;white-space:pre;-webkit-text-stroke:0.2px #000;transform:scaleX(0.9487);transform-origin:0 0;-webkit-text-stroke:0.6px #000;">PT11. Daily Tracking Phasing</div>
<div style="position:absolute;left:26.40px;top:269.00px;font-size:10.3px;line-height:1;color:#000;white-space:pre;-webkit-text-stroke:0.2px #000;transform:scaleX(0.9913);transform-origin:0 0;">MTD : 22/12/2016</div>
<div style="position:absolute;left:237.30px;top:269.00px;font-size:10.3px;line-height:1;color:#000;white-space:pre;-webkit-text-stroke:0.2px #000;transform:scaleX(0.9702);transform-origin:0 0;">Working day :27</div>
<div style="position:absolute;left:26.40px;top:284.00px;font-size:10.3px;line-height:1;color:#000;white-space:pre;-webkit-text-stroke:0.2px #000;transform:scaleX(0.9750);transform-origin:0 0;">Created by 3466 - at 12/23/2016 2:21:33 PM</div>
<div style="position:absolute;left:237.30px;top:284.00px;font-size:10.3px;line-height:1;color:#000;white-space:pre;-webkit-text-stroke:0.2px #000;transform:scaleX(0.9513);transform-origin:0 0;">Time gone :19(70.37%)</div>
<div style="position:absolute;left:912.07px;top:284.00px;font-size:10.3px;line-height:1;color:#000;white-space:pre;-webkit-text-stroke:0.2px #000;transform:scaleX(0.9300);transform-origin:0 0;">&lt;60% Vs. Time Gone</div>
<div style="position:absolute;left:901.81px;top:299.00px;font-size:10.3px;line-height:1;color:#000;white-space:pre;-webkit-text-stroke:0.2px #000;transform:scaleX(0.9300);transform-origin:0 0;">&gt;=60% &amp; &lt;100% Vs. Time gone</div>
<div style="position:absolute;left:890.28px;top:314.00px;font-size:10.3px;line-height:1;color:#000;white-space:pre;-webkit-text-stroke:0.2px #000;transform:scaleX(0.9300);transform-origin:0 0;">&gt;=100% Vs. Time gone</div>
<div style="position:absolute;left:26.30px;top:344.00px;font-size:10.3px;line-height:1;color:#000;white-space:pre;-webkit-text-stroke:0.2px #000;transform:scaleX(0.9509);transform-origin:0 0;">RSM phụ trách</div>
<div style="position:absolute;left:109.30px;top:344.00px;font-size:10.3px;line-height:1;color:#000;white-space:pre;-webkit-text-stroke:0.2px #000;transform:scaleX(0.9617);transform-origin:0 0;">(All)</div>
<div style="position:absolute;left:26.30px;top:359.00px;font-size:10.3px;line-height:1;color:#000;white-space:pre;-webkit-text-stroke:0.2px #000;transform:scaleX(0.9588);transform-origin:0 0;">ASM phụ trách</div>
<div style="position:absolute;left:109.30px;top:359.00px;font-size:10.3px;line-height:1;color:#000;white-space:pre;-webkit-text-stroke:0.2px #000;transform:scaleX(0.9617);transform-origin:0 0;">(All)</div>
<div style="position:absolute;left:26.30px;top:374.00px;font-size:10.3px;line-height:1;color:#000;white-space:pre;-webkit-text-stroke:0.2px #000;transform:scaleX(0.8919);transform-origin:0 0;">Area</div>
<div style="position:absolute;left:109.30px;top:374.00px;font-size:10.3px;line-height:1;color:#000;white-space:pre;-webkit-text-stroke:0.2px #000;transform:scaleX(0.9617);transform-origin:0 0;">(All)</div>
<div style="position:absolute;left:26.30px;top:389.00px;font-size:10.3px;line-height:1;color:#000;white-space:pre;-webkit-text-stroke:0.2px #000;transform:scaleX(0.9031);transform-origin:0 0;">Loại NVBH</div>
<div style="position:absolute;left:109.30px;top:389.00px;font-size:10.3px;line-height:1;color:#000;white-space:pre;-webkit-text-stroke:0.2px #000;transform:scaleX(0.9617);transform-origin:0 0;">(All)</div>
<div style="position:absolute;left:384.00px;top:344.00px;font-size:10.3px;line-height:1;color:#000;white-space:pre;-webkit-text-stroke:0.2px #000;transform:scaleX(0.9219);transform-origin:0 0;">Mã NVBH</div>
<div style="position:absolute;left:560.00px;top:344.00px;font-size:10.3px;line-height:1;color:#000;white-space:pre;-webkit-text-stroke:0.2px #000;transform:scaleX(0.9617);transform-origin:0 0;">(All)</div>
<div style="position:absolute;left:384.00px;top:359.00px;font-size:10.3px;line-height:1;color:#000;white-space:pre;-webkit-text-stroke:0.2px #000;transform:scaleX(0.9156);transform-origin:0 0;">Mã NPP</div>
<div style="position:absolute;left:560.00px;top:359.00px;font-size:10.3px;line-height:1;color:#000;white-space:pre;-webkit-text-stroke:0.2px #000;transform:scaleX(0.9617);transform-origin:0 0;">(All)</div>
<div style="position:absolute;left:641.00px;top:419.00px;font-size:10.3px;line-height:1;color:#000;white-space:pre;-webkit-text-stroke:0.2px #000;transform:scaleX(0.9287);transform-origin:0 0;">Data</div>
<div style="position:absolute;left:26.30px;top:434.00px;font-size:10.3px;line-height:1;color:#000;white-space:pre;-webkit-text-stroke:0.2px #000;transform:scaleX(0.9194);transform-origin:0 0;">Region</div>
<div style="position:absolute;left:109.30px;top:434.00px;font-size:10.3px;line-height:1;color:#000;white-space:pre;-webkit-text-stroke:0.2px #000;transform:scaleX(0.9427);transform-origin:0 0;">Nhà Phân Phối</div>
<div style="position:absolute;left:237.30px;top:434.00px;font-size:10.3px;line-height:1;color:#000;white-space:pre;-webkit-text-stroke:0.2px #000;transform:scaleX(0.9290);transform-origin:0 0;">SE phụ trách</div>
<div style="position:absolute;left:384.00px;top:434.00px;font-size:10.3px;line-height:1;color:#000;white-space:pre;-webkit-text-stroke:0.2px #000;transform:scaleX(0.9373);transform-origin:0 0;">Nhân Viên Bán Hàng</div>
<div style="position:absolute;left:560.00px;top:434.00px;font-size:10.3px;line-height:1;color:#000;white-space:pre;-webkit-text-stroke:0.2px #000;transform:scaleX(0.9364);transform-origin:0 0;">Chuyên bán</div>
<div style="position:absolute;left:641.00px;top:434.00px;font-size:10.3px;line-height:1;color:#000;white-space:pre;-webkit-text-stroke:0.2px #000;transform:scaleX(0.9032);transform-origin:0 0;">Chỉ tiêu S3 DBB</div>
<div style="position:absolute;left:727.00px;top:434.00px;font-size:10.3px;line-height:1;color:#000;white-space:pre;-webkit-text-stroke:0.2px #000;transform:scaleX(0.9130);transform-origin:0 0;">Thực hiện S3 DBB</div>
<div style="position:absolute;left:826.00px;top:434.00px;font-size:10.3px;line-height:1;color:#000;white-space:pre;-webkit-text-stroke:0.2px #000;transform:scaleX(0.8949);transform-origin:0 0;">% đạt S3 DBB</div>
<div style="position:absolute;left:901.00px;top:434.00px;font-size:10.3px;line-height:1;color:#000;white-space:pre;-webkit-text-stroke:0.2px #000;transform:scaleX(0.9131);transform-origin:0 0;">Chỉ tiêu S3 IFT</div>
<div style="position:absolute;left:981.00px;top:434.00px;font-size:10.3px;line-height:1;color:#000;white-space:pre;-webkit-text-stroke:0.2px #000;transform:scaleX(0.9034);transform-origin:0 0;">Thực hiện S3 IFT</div>
<div style="position:absolute;left:1074.00px;top:434.00px;font-size:10.3px;line-height:1;color:#000;white-space:pre;-webkit-text-stroke:0.2px #000;transform:scaleX(0.8887);transform-origin:0 0;">% đạt S3 IFT</div>
<div style="position:absolute;left:1143.00px;top:434.00px;font-size:10.3px;line-height:1;color:#000;white-space:pre;-webkit-text-stroke:0.2px #000;transform:scaleX(0.9192);transform-origin:0 0;">Chỉ tiêu S3</div>
<div style="position:absolute;left:1219.00px;top:434.00px;font-size:10.3px;line-height:1;color:#000;white-space:pre;-webkit-text-stroke:0.2px #000;transform:scaleX(0.9300);transform-origin:0 0;">Thực hiện S3</div>
<svg style="left:25px;top:450px" width="6" height="6" viewBox="0 0 6 6"><rect x=".5" y=".5" width="5" height="5" fill="#fff" stroke="#9a9a9a" stroke-width=".8"/><path d="M1.5 3h3" stroke="#777" stroke-width=".8"/></svg>
<div style="position:absolute;left:36.20px;top:449.00px;font-size:10.3px;line-height:1;color:#000;white-space:pre;-webkit-text-stroke:0.2px #000;transform:scaleX(0.9256);transform-origin:0 0;">5. HCM</div>
<svg style="left:109px;top:450px" width="6" height="6" viewBox="0 0 6 6"><rect x=".5" y=".5" width="5" height="5" fill="#fff" stroke="#9a9a9a" stroke-width=".8"/><path d="M1.5 3h3" stroke="#777" stroke-width=".8"/></svg>
<div style="position:absolute;left:120.50px;top:449.00px;font-size:10.3px;line-height:1;color:#000;white-space:pre;-webkit-text-stroke:0.2px #000;transform:scaleX(0.9382);transform-origin:0 0;">102483_Chín Nguyện</div>
<svg style="left:237px;top:450px" width="6" height="6" viewBox="0 0 6 6"><rect x=".5" y=".5" width="5" height="5" fill="#fff" stroke="#9a9a9a" stroke-width=".8"/><path d="M1.5 3h3" stroke="#777" stroke-width=".8"/></svg>
<div style="position:absolute;left:248.00px;top:449.00px;font-size:10.3px;line-height:1;color:#000;white-space:pre;-webkit-text-stroke:0.2px #000;transform:scaleX(0.8969);transform-origin:0 0;">3466_LÊ HOÀNG THẮNG</div>
<svg style="left:384px;top:450px" width="6" height="6" viewBox="0 0 6 6"><rect x=".5" y=".5" width="5" height="5" fill="#fff" stroke="#9a9a9a" stroke-width=".8"/><path d="M1.5 3h3" stroke="#777" stroke-width=".8"/></svg>
<div style="position:absolute;left:394.00px;top:449.00px;font-size:10.3px;line-height:1;color:#000;white-space:pre;-webkit-text-stroke:0.2px #000;transform:scaleX(0.9297);transform-origin:0 0;">AVPS001_Nguyễn Văn Đắc</div>
<div style="position:absolute;left:560.00px;top:449.00px;font-size:10.3px;line-height:1;color:#000;white-space:pre;-webkit-text-stroke:0.2px #000;">Mix</div>
<div style="position:absolute;left:658.46px;top:449.00px;font-size:10.3px;line-height:1;color:#000;white-space:pre;-webkit-text-stroke:0.2px #000;transform:scaleX(0.9650);transform-origin:0 0;">1.669.200.908</div>
<div style="position:absolute;left:766.24px;top:449.00px;font-size:10.3px;line-height:1;color:#000;white-space:pre;-webkit-text-stroke:0.2px #000;transform:scaleX(0.9650);transform-origin:0 0;">961.774.593</div>
<div style="position:absolute;left:825.0px;top:447.0px;width:11px;height:11px;border-radius:50%;box-sizing:border-box;border:1px solid #b52a2a;background:radial-gradient(circle at 40% 30%,#ffb3b3,#f04848 75%);"></div>
<div style="position:absolute;left:862.80px;top:449.00px;font-size:10.3px;line-height:1;color:#000;white-space:pre;-webkit-text-stroke:0.2px #000;transform:scaleX(0.9650);transform-origin:0 0;">57,62%</div>
<div style="position:absolute;left:912.96px;top:449.00px;font-size:10.3px;line-height:1;color:#000;white-space:pre;-webkit-text-stroke:0.2px #000;transform:scaleX(0.9650);transform-origin:0 0;">2.721.669.001</div>
<div style="position:absolute;left:1005.96px;top:449.00px;font-size:10.3px;line-height:1;color:#000;white-space:pre;-webkit-text-stroke:0.2px #000;transform:scaleX(0.9650);transform-origin:0 0;">1.307.706.876</div>
<div style="position:absolute;left:1073.0px;top:447.0px;width:11px;height:11px;border-radius:50%;box-sizing:border-box;border:1px solid #b52a2a;background:radial-gradient(circle at 40% 30%,#ffb3b3,#f04848 75%);"></div>
<div style="position:absolute;left:1104.80px;top:449.00px;font-size:10.3px;line-height:1;color:#000;white-space:pre;-webkit-text-stroke:0.2px #000;transform:scaleX(0.9650);transform-origin:0 0;">48,05%</div>
<div style="position:absolute;left:1150.96px;top:449.00px;font-size:10.3px;line-height:1;color:#000;white-space:pre;-webkit-text-stroke:0.2px #000;transform:scaleX(0.9650);transform-origin:0 0;">4.390.869.909</div>
<div style="position:absolute;left:1226.96px;top:449.00px;font-size:10.3px;line-height:1;color:#000;white-space:pre;-webkit-text-stroke:0.2px #000;transform:scaleX(0.9650);transform-origin:0 0;">2.269.481.469</div>
<svg style="left:384px;top:465px" width="6" height="6" viewBox="0 0 6 6"><rect x=".5" y=".5" width="5" height="5" fill="#fff" stroke="#9a9a9a" stroke-width=".8"/><path d="M1.5 3h3" stroke="#777" stroke-width=".8"/></svg>
<div style="position:absolute;left:394.00px;top:464.00px;font-size:10.3px;line-height:1;color:#000;white-space:pre;-webkit-text-stroke:0.2px #000;transform:scaleX(0.9311);transform-origin:0 0;">AVPS002_Trần Văn Trí</div>
<div style="position:absolute;left:560.00px;top:464.00px;font-size:10.3px;line-height:1;color:#000;white-space:pre;-webkit-text-stroke:0.2px #000;">Mix</div>
<div style="position:absolute;left:666.74px;top:464.00px;font-size:10.3px;line-height:1;color:#000;white-space:pre;-webkit-text-stroke:0.2px #000;transform:scaleX(0.9650);transform-origin:0 0;">246.035.461</div>
<div style="position:absolute;left:766.24px;top:464.00px;font-size:10.3px;line-height:1;color:#000;white-space:pre;-webkit-text-stroke:0.2px #000;transform:scaleX(0.9650);transform-origin:0 0;">191.090.944</div>
<div style="position:absolute;left:825.0px;top:462.0px;width:11px;height:11px;border-radius:50%;box-sizing:border-box;border:1px solid #137a38;background:radial-gradient(circle at 40% 30%,#7fdca0,#1fa050 75%);"></div>
<div style="position:absolute;left:862.80px;top:464.00px;font-size:10.3px;line-height:1;color:#000;white-space:pre;-webkit-text-stroke:0.2px #000;transform:scaleX(0.9650);transform-origin:0 0;">77,67%</div>
<div style="position:absolute;left:926.77px;top:464.00px;font-size:10.3px;line-height:1;color:#000;white-space:pre;-webkit-text-stroke:0.2px #000;transform:scaleX(0.9650);transform-origin:0 0;">35.231.000</div>
<div style="position:absolute;left:1019.77px;top:464.00px;font-size:10.3px;line-height:1;color:#000;white-space:pre;-webkit-text-stroke:0.2px #000;transform:scaleX(0.9650);transform-origin:0 0;">19.815.089</div>
<div style="position:absolute;left:1073.0px;top:462.0px;width:11px;height:11px;border-radius:50%;box-sizing:border-box;border:1px solid #b52a2a;background:radial-gradient(circle at 40% 30%,#ffb3b3,#f04848 75%);"></div>
<div style="position:absolute;left:1104.80px;top:464.00px;font-size:10.3px;line-height:1;color:#000;white-space:pre;-webkit-text-stroke:0.2px #000;transform:scaleX(0.9650);transform-origin:0 0;">56,24%</div>
<div style="position:absolute;left:1159.24px;top:464.00px;font-size:10.3px;line-height:1;color:#000;white-space:pre;-webkit-text-stroke:0.2px #000;transform:scaleX(0.9650);transform-origin:0 0;">281.266.461</div>
<div style="position:absolute;left:1235.24px;top:464.00px;font-size:10.3px;line-height:1;color:#000;white-space:pre;-webkit-text-stroke:0.2px #000;transform:scaleX(0.9650);transform-origin:0 0;">210.906.033</div>
<svg style="left:384px;top:480px" width="6" height="6" viewBox="0 0 6 6"><rect x=".5" y=".5" width="5" height="5" fill="#fff" stroke="#9a9a9a" stroke-width=".8"/><path d="M1.5 3h3" stroke="#777" stroke-width=".8"/></svg>
<div style="position:absolute;left:394.00px;top:479.00px;font-size:10.3px;line-height:1;color:#000;white-space:pre;-webkit-text-stroke:0.2px #000;transform:scaleX(0.9130);transform-origin:0 0;">AVPS004_Cao Đăng Khoa</div>
<div style="position:absolute;left:560.00px;top:479.00px;font-size:10.3px;line-height:1;color:#000;white-space:pre;-webkit-text-stroke:0.2px #000;transform:scaleX(0.8313);transform-origin:0 0;">DBB</div>
<div style="position:absolute;left:666.74px;top:479.00px;font-size:10.3px;line-height:1;color:#000;white-space:pre;-webkit-text-stroke:0.2px #000;transform:scaleX(0.9650);transform-origin:0 0;">258.739.987</div>
<div style="position:absolute;left:766.24px;top:479.00px;font-size:10.3px;line-height:1;color:#000;white-space:pre;-webkit-text-stroke:0.2px #000;transform:scaleX(0.9650);transform-origin:0 0;">178.079.087</div>
<div style="position:absolute;left:825.0px;top:477.0px;width:11px;height:11px;border-radius:50%;box-sizing:border-box;border:1px solid #e08a10;background:radial-gradient(circle at 40% 30%,#fff0a0,#ffd03a 75%);"></div>
<div style="position:absolute;left:862.80px;top:479.00px;font-size:10.3px;line-height:1;color:#000;white-space:pre;-webkit-text-stroke:0.2px #000;transform:scaleX(0.9650);transform-origin:0 0;">68,83%</div>
<div style="position:absolute;left:970.97px;top:479.00px;font-size:10.3px;line-height:1;color:#000;white-space:pre;-webkit-text-stroke:0.2px #000;transform:scaleX(0.9650);transform-origin:0 0;">0</div>
<div style="position:absolute;left:1063.97px;top:479.00px;font-size:10.3px;line-height:1;color:#000;white-space:pre;-webkit-text-stroke:0.2px #000;transform:scaleX(0.9650);transform-origin:0 0;">0</div>
<div style="position:absolute;left:1073.0px;top:477.0px;width:11px;height:11px;border-radius:50%;box-sizing:border-box;border:1px solid #b52a2a;background:radial-gradient(circle at 40% 30%,#ffb3b3,#f04848 75%);"></div>
<div style="position:absolute;left:1110.33px;top:479.00px;font-size:10.3px;line-height:1;color:#000;white-space:pre;-webkit-text-stroke:0.2px #000;transform:scaleX(0.9650);transform-origin:0 0;">0,00%</div>
<div style="position:absolute;left:1159.24px;top:479.00px;font-size:10.3px;line-height:1;color:#000;white-space:pre;-webkit-text-stroke:0.2px #000;transform:scaleX(0.9650);transform-origin:0 0;">258.739.987</div>
<div style="position:absolute;left:1235.24px;top:479.00px;font-size:10.3px;line-height:1;color:#000;white-space:pre;-webkit-text-stroke:0.2px #000;transform:scaleX(0.9650);transform-origin:0 0;">178.079.087</div>
<svg style="left:384px;top:495px" width="6" height="6" viewBox="0 0 6 6"><rect x=".5" y=".5" width="5" height="5" fill="#fff" stroke="#9a9a9a" stroke-width=".8"/><path d="M1.5 3h3" stroke="#777" stroke-width=".8"/></svg>
<div style="position:absolute;left:394.00px;top:494.00px;font-size:10.3px;line-height:1;color:#000;white-space:pre;-webkit-text-stroke:0.2px #000;transform:scaleX(0.9427);transform-origin:0 0;">AVPS005_Nguyễn Thị Mỹ Linh</div>
<div style="position:absolute;left:560.00px;top:494.00px;font-size:10.3px;line-height:1;color:#000;white-space:pre;-webkit-text-stroke:0.2px #000;">Mix</div>
<div style="position:absolute;left:666.74px;top:494.00px;font-size:10.3px;line-height:1;color:#000;white-space:pre;-webkit-text-stroke:0.2px #000;transform:scaleX(0.9650);transform-origin:0 0;">265.629.692</div>
<div style="position:absolute;left:766.24px;top:494.00px;font-size:10.3px;line-height:1;color:#000;white-space:pre;-webkit-text-stroke:0.2px #000;transform:scaleX(0.9650);transform-origin:0 0;">169.177.072</div>
<div style="position:absolute;left:825.0px;top:492.0px;width:11px;height:11px;border-radius:50%;box-sizing:border-box;border:1px solid #b52a2a;background:radial-gradient(circle at 40% 30%,#ffb3b3,#f04848 75%);"></div>
<div style="position:absolute;left:862.80px;top:494.00px;font-size:10.3px;line-height:1;color:#000;white-space:pre;-webkit-text-stroke:0.2px #000;transform:scaleX(0.9650);transform-origin:0 0;">63,69%</div>
<div style="position:absolute;left:926.77px;top:494.00px;font-size:10.3px;line-height:1;color:#000;white-space:pre;-webkit-text-stroke:0.2px #000;transform:scaleX(0.9650);transform-origin:0 0;">29.910.774</div>
<div style="position:absolute;left:1019.77px;top:494.00px;font-size:10.3px;line-height:1;color:#000;white-space:pre;-webkit-text-stroke:0.2px #000;transform:scaleX(0.9650);transform-origin:0 0;">15.557.864</div>
<div style="position:absolute;left:1073.0px;top:492.0px;width:11px;height:11px;border-radius:50%;box-sizing:border-box;border:1px solid #b52a2a;background:radial-gradient(circle at 40% 30%,#ffb3b3,#f04848 75%);"></div>
<div style="position:absolute;left:1104.80px;top:494.00px;font-size:10.3px;line-height:1;color:#000;white-space:pre;-webkit-text-stroke:0.2px #000;transform:scaleX(0.9650);transform-origin:0 0;">52,01%</div>
<div style="position:absolute;left:1159.24px;top:494.00px;font-size:10.3px;line-height:1;color:#000;white-space:pre;-webkit-text-stroke:0.2px #000;transform:scaleX(0.9650);transform-origin:0 0;">295.540.466</div>
<div style="position:absolute;left:1235.24px;top:494.00px;font-size:10.3px;line-height:1;color:#000;white-space:pre;-webkit-text-stroke:0.2px #000;transform:scaleX(0.9650);transform-origin:0 0;">184.734.936</div>
<svg style="left:384px;top:510px" width="6" height="6" viewBox="0 0 6 6"><rect x=".5" y=".5" width="5" height="5" fill="#fff" stroke="#9a9a9a" stroke-width=".8"/><path d="M1.5 3h3" stroke="#777" stroke-width=".8"/></svg>
<div style="position:absolute;left:394.00px;top:509.00px;font-size:10.3px;line-height:1;color:#000;white-space:pre;-webkit-text-stroke:0.2px #000;transform:scaleX(0.9330);transform-origin:0 0;">AVPS006_Nguyễn Văn Dũng</div>
<div style="position:absolute;left:560.00px;top:509.00px;font-size:10.3px;line-height:1;color:#000;white-space:pre;-webkit-text-stroke:0.2px #000;transform:scaleX(0.8313);transform-origin:0 0;">DBB</div>
<div style="position:absolute;left:666.74px;top:509.00px;font-size:10.3px;line-height:1;color:#000;white-space:pre;-webkit-text-stroke:0.2px #000;transform:scaleX(0.9650);transform-origin:0 0;">259.022.817</div>
<div style="position:absolute;left:766.98px;top:509.00px;font-size:10.3px;line-height:1;color:#000;white-space:pre;-webkit-text-stroke:0.2px #000;transform:scaleX(0.9650);transform-origin:0 0;">211.516.053</div>
<div style="position:absolute;left:825.0px;top:507.0px;width:11px;height:11px;border-radius:50%;box-sizing:border-box;border:1px solid #137a38;background:radial-gradient(circle at 40% 30%,#7fdca0,#1fa050 75%);"></div>
<div style="position:absolute;left:862.80px;top:509.00px;font-size:10.3px;line-height:1;color:#000;white-space:pre;-webkit-text-stroke:0.2px #000;transform:scaleX(0.9650);transform-origin:0 0;">81,66%</div>
<div style="position:absolute;left:970.97px;top:509.00px;font-size:10.3px;line-height:1;color:#000;white-space:pre;-webkit-text-stroke:0.2px #000;transform:scaleX(0.9650);transform-origin:0 0;">0</div>
<div style="position:absolute;left:1063.97px;top:509.00px;font-size:10.3px;line-height:1;color:#000;white-space:pre;-webkit-text-stroke:0.2px #000;transform:scaleX(0.9650);transform-origin:0 0;">0</div>
<div style="position:absolute;left:1073.0px;top:507.0px;width:11px;height:11px;border-radius:50%;box-sizing:border-box;border:1px solid #b52a2a;background:radial-gradient(circle at 40% 30%,#ffb3b3,#f04848 75%);"></div>
<div style="position:absolute;left:1110.33px;top:509.00px;font-size:10.3px;line-height:1;color:#000;white-space:pre;-webkit-text-stroke:0.2px #000;transform:scaleX(0.9650);transform-origin:0 0;">0,00%</div>
<div style="position:absolute;left:1159.24px;top:509.00px;font-size:10.3px;line-height:1;color:#000;white-space:pre;-webkit-text-stroke:0.2px #000;transform:scaleX(0.9650);transform-origin:0 0;">259.022.817</div>
<div style="position:absolute;left:1235.98px;top:509.00px;font-size:10.3px;line-height:1;color:#000;white-space:pre;-webkit-text-stroke:0.2px #000;transform:scaleX(0.9650);transform-origin:0 0;">211.516.053</div>
<svg style="left:384px;top:525px" width="6" height="6" viewBox="0 0 6 6"><rect x=".5" y=".5" width="5" height="5" fill="#fff" stroke="#9a9a9a" stroke-width=".8"/><path d="M1.5 3h3" stroke="#777" stroke-width=".8"/></svg>
<div style="position:absolute;left:394.00px;top:524.00px;font-size:10.3px;line-height:1;color:#000;white-space:pre;-webkit-text-stroke:0.2px #000;transform:scaleX(0.9260);transform-origin:0 0;">AVPS007_Vũ Ngọc Thành</div>
<div style="position:absolute;left:560.00px;top:524.00px;font-size:10.3px;line-height:1;color:#000;white-space:pre;-webkit-text-stroke:0.2px #000;transform:scaleX(0.8313);transform-origin:0 0;">DBB</div>
<div style="position:absolute;left:672.27px;top:524.00px;font-size:10.3px;line-height:1;color:#000;white-space:pre;-webkit-text-stroke:0.2px #000;transform:scaleX(0.9650);transform-origin:0 0;">74.299.649</div>
<div style="position:absolute;left:771.77px;top:524.00px;font-size:10.3px;line-height:1;color:#000;white-space:pre;-webkit-text-stroke:0.2px #000;transform:scaleX(0.9650);transform-origin:0 0;">53.789.505</div>
<div style="position:absolute;left:825.0px;top:522.0px;width:11px;height:11px;border-radius:50%;box-sizing:border-box;border:1px solid #137a38;background:radial-gradient(circle at 40% 30%,#7fdca0,#1fa050 75%);"></div>
<div style="position:absolute;left:862.80px;top:524.00px;font-size:10.3px;line-height:1;color:#000;white-space:pre;-webkit-text-stroke:0.2px #000;transform:scaleX(0.9650);transform-origin:0 0;">72,40%</div>
<div style="position:absolute;left:970.97px;top:524.00px;font-size:10.3px;line-height:1;color:#000;white-space:pre;-webkit-text-stroke:0.2px #000;transform:scaleX(0.9650);transform-origin:0 0;">0</div>
<div style="position:absolute;left:1063.97px;top:524.00px;font-size:10.3px;line-height:1;color:#000;white-space:pre;-webkit-text-stroke:0.2px #000;transform:scaleX(0.9650);transform-origin:0 0;">0</div>
<div style="position:absolute;left:1073.0px;top:522.0px;width:11px;height:11px;border-radius:50%;box-sizing:border-box;border:1px solid #b52a2a;background:radial-gradient(circle at 40% 30%,#ffb3b3,#f04848 75%);"></div>
<div style="position:absolute;left:1110.33px;top:524.00px;font-size:10.3px;line-height:1;color:#000;white-space:pre;-webkit-text-stroke:0.2px #000;transform:scaleX(0.9650);transform-origin:0 0;">0,00%</div>
<div style="position:absolute;left:1164.77px;top:524.00px;font-size:10.3px;line-height:1;color:#000;white-space:pre;-webkit-text-stroke:0.2px #000;transform:scaleX(0.9650);transform-origin:0 0;">74.299.649</div>
<div style="position:absolute;left:1240.77px;top:524.00px;font-size:10.3px;line-height:1;color:#000;white-space:pre;-webkit-text-stroke:0.2px #000;transform:scaleX(0.9650);transform-origin:0 0;">53.789.505</div>
<svg style="left:384px;top:540px" width="6" height="6" viewBox="0 0 6 6"><rect x=".5" y=".5" width="5" height="5" fill="#fff" stroke="#9a9a9a" stroke-width=".8"/><path d="M1.5 3h3" stroke="#777" stroke-width=".8"/></svg>
<div style="position:absolute;left:394.00px;top:539.00px;font-size:10.3px;line-height:1;color:#000;white-space:pre;-webkit-text-stroke:0.2px #000;transform:scaleX(0.9342);transform-origin:0 0;">AVPS008_Trần Thị Thu Trang</div>
<div style="position:absolute;left:560.00px;top:539.00px;font-size:10.3px;line-height:1;color:#000;white-space:pre;-webkit-text-stroke:0.2px #000;">Mix</div>
<div style="position:absolute;left:666.74px;top:539.00px;font-size:10.3px;line-height:1;color:#000;white-space:pre;-webkit-text-stroke:0.2px #000;transform:scaleX(0.9650);transform-origin:0 0;">235.438.905</div>
<div style="position:absolute;left:766.24px;top:539.00px;font-size:10.3px;line-height:1;color:#000;white-space:pre;-webkit-text-stroke:0.2px #000;transform:scaleX(0.9650);transform-origin:0 0;">161.019.779</div>
<div style="position:absolute;left:825.0px;top:537.0px;width:11px;height:11px;border-radius:50%;box-sizing:border-box;border:1px solid #e08a10;background:radial-gradient(circle at 40% 30%,#fff0a0,#ffd03a 75%);"></div>
<div style="position:absolute;left:862.80px;top:539.00px;font-size:10.3px;line-height:1;color:#000;white-space:pre;-webkit-text-stroke:0.2px #000;transform:scaleX(0.9650);transform-origin:0 0;">68,39%</div>
<div style="position:absolute;left:926.77px;top:539.00px;font-size:10.3px;line-height:1;color:#000;white-space:pre;-webkit-text-stroke:0.2px #000;transform:scaleX(0.9650);transform-origin:0 0;">33.003.182</div>
<div style="position:absolute;left:1019.77px;top:539.00px;font-size:10.3px;line-height:1;color:#000;white-space:pre;-webkit-text-stroke:0.2px #000;transform:scaleX(0.9650);transform-origin:0 0;">33.532.818</div>
<div style="position:absolute;left:1073.0px;top:537.0px;width:11px;height:11px;border-radius:50%;box-sizing:border-box;border:1px solid #137a38;background:radial-gradient(circle at 40% 30%,#7fdca0,#1fa050 75%);"></div>
<div style="position:absolute;left:1099.27px;top:539.00px;font-size:10.3px;line-height:1;color:#000;white-space:pre;-webkit-text-stroke:0.2px #000;transform:scaleX(0.9650);transform-origin:0 0;">101,60%</div>
<div style="position:absolute;left:1159.24px;top:539.00px;font-size:10.3px;line-height:1;color:#000;white-space:pre;-webkit-text-stroke:0.2px #000;transform:scaleX(0.9650);transform-origin:0 0;">268.442.087</div>
<div style="position:absolute;left:1235.24px;top:539.00px;font-size:10.3px;line-height:1;color:#000;white-space:pre;-webkit-text-stroke:0.2px #000;transform:scaleX(0.9650);transform-origin:0 0;">194.552.597</div>
<div style="position:absolute;left:26.30px;top:554.00px;font-size:10.3px;line-height:1;color:#000;white-space:pre;-webkit-text-stroke:0.2px #000;transform:scaleX(0.9769);transform-origin:0 0;">Grand Total</div>
<div style="position:absolute;left:658.46px;top:554.00px;font-size:10.3px;line-height:1;color:#000;white-space:pre;-webkit-text-stroke:0.2px #000;transform:scaleX(0.9650);transform-origin:0 0;">3.008.367.419</div>
<div style="position:absolute;left:757.96px;top:554.00px;font-size:10.3px;line-height:1;color:#000;white-space:pre;-webkit-text-stroke:0.2px #000;transform:scaleX(0.9650);transform-origin:0 0;">1.926.447.033</div>
<div style="position:absolute;left:825.0px;top:552.0px;width:11px;height:11px;border-radius:50%;box-sizing:border-box;border:1px solid #b52a2a;background:radial-gradient(circle at 40% 30%,#ffb3b3,#f04848 75%);"></div>
<div style="position:absolute;left:862.80px;top:554.00px;font-size:10.3px;line-height:1;color:#000;white-space:pre;-webkit-text-stroke:0.2px #000;transform:scaleX(0.9650);transform-origin:0 0;">64,04%</div>
<div style="position:absolute;left:912.96px;top:554.00px;font-size:10.3px;line-height:1;color:#000;white-space:pre;-webkit-text-stroke:0.2px #000;transform:scaleX(0.9650);transform-origin:0 0;">2.819.813.957</div>
<div style="position:absolute;left:1005.96px;top:554.00px;font-size:10.3px;line-height:1;color:#000;white-space:pre;-webkit-text-stroke:0.2px #000;transform:scaleX(0.9650);transform-origin:0 0;">1.376.612.647</div>
<div style="position:absolute;left:1073.0px;top:552.0px;width:11px;height:11px;border-radius:50%;box-sizing:border-box;border:1px solid #b52a2a;background:radial-gradient(circle at 40% 30%,#ffb3b3,#f04848 75%);"></div>
<div style="position:absolute;left:1104.80px;top:554.00px;font-size:10.3px;line-height:1;color:#000;white-space:pre;-webkit-text-stroke:0.2px #000;transform:scaleX(0.9650);transform-origin:0 0;">48,82%</div>
<div style="position:absolute;left:1150.96px;top:554.00px;font-size:10.3px;line-height:1;color:#000;white-space:pre;-webkit-text-stroke:0.2px #000;transform:scaleX(0.9650);transform-origin:0 0;">5.828.181.376</div>
<div style="position:absolute;left:1226.96px;top:554.00px;font-size:10.3px;line-height:1;color:#000;white-space:pre;-webkit-text-stroke:0.2px #000;transform:scaleX(0.9650);transform-origin:0 0;">3.303.059.680</div>
<div style="position:absolute;left:22px;top:224px;width:86px;height:42px;border:2px solid #1e7145;box-sizing:border-box;"></div>
<div style="position:absolute;left:104px;top:263px;width:5px;height:5px;background:#1e7145;border:1px solid #fff;box-sizing:content-box;margin:-1px;"></div>
<div style="position:absolute;left:510px;top:186px;width:420px;height:153px;background:#ececec;border-radius:5px;box-shadow:0 22px 55px rgba(0,0,0,0.42),0 0 0 0.5px rgba(0,0,0,0.25);overflow:hidden;"></div>
<div style="position:absolute;left:510px;top:186px;width:420px;height:22px;background:linear-gradient(#e6e5ea,#d6d5da);border-radius:5px 5px 0 0;border-bottom:1px solid #b4b4b4;box-sizing:border-box;"></div>
<svg style="left:536px;top:226px" width="62" height="62" viewBox="0 0 62 62">
<defs><linearGradient id="xg" x1="0" y1="0" x2="1" y2="0"><stop offset="0" stop-color="#0f7d47"/><stop offset="1" stop-color="#1a9a5e"/></linearGradient>
<filter id="sh" x="-20%" y="-20%" width="140%" height="140%"><feGaussianBlur stdDeviation=".6"/></filter></defs>
<rect x="35.5" y="7.8" width="23" height="45" fill="#000" opacity=".18" filter="url(#sh)"/>
<rect x="35" y="7.3" width="23.3" height="44.7" fill="#fff"/>
<g fill="#3a3a3a"><rect x="35.3" y="14" width="6.7" height="4.9"/><rect x="44" y="14" width="9" height="4.9"/></g>
<g fill="#3d9a6c"><rect x="35.3" y="21.3" width="6.7" height="4.3"/><rect x="44" y="21.3" width="9" height="4.3"/>
<rect x="35.3" y="28.3" width="6.7" height="4.3"/><rect x="44" y="28.3" width="9" height="4.3"/>
<rect x="35.3" y="35.3" width="6.7" height="4.3"/><rect x="44" y="35.3" width="9" height="4.3"/>
<rect x="35.3" y="42.3" width="6.7" height="4.5"/><rect x="44" y="42.3" width="9" height="4.5"/></g>
<path d="M1.9 8L35 1.9V57.7L1.9 51.6z" fill="url(#xg)"/>
<path d="M9.8 19.5h5.3l3.3 6.2 3.3-6.2h5.2l-5.7 10.2 6 10.8h-5.3l-3.5-6.6-3.6 6.6h-5.2l6-10.8z" fill="#d9f2e2"/>
</svg>
<div style="position:absolute;left:616.40px;top:228.00px;font-size:12.2px;line-height:1;font-weight:bold;color:#000;white-space:pre;-webkit-text-stroke:0.2px #000;transform:scaleX(1.1272);transform-origin:0 0;">Alert</div>
<div style="position:absolute;left:616.40px;top:251.00px;font-size:11.8px;line-height:1;color:#111;white-space:pre;-webkit-text-stroke:0.2px #111;">This PivotTable connects to an external data source</div>
<div style="position:absolute;left:616.40px;top:265.00px;font-size:11.8px;line-height:1;color:#111;white-space:pre;-webkit-text-stroke:0.2px #111;transform:scaleX(1.0125);transform-origin:0 0;">that&#x27;s not supported in this version of Excel.</div>
<div style="position:absolute;left:831px;top:299px;width:79px;height:21px;background:linear-gradient(#6cb3fa,#2a8bf8 50%,#1172f6);border-radius:4px;box-shadow:0 0 0 .5px rgba(0,60,160,.35);"></div>
<div style="position:absolute;left:860.75px;top:303.00px;font-size:13px;line-height:1;color:#fff;white-space:pre;-webkit-text-stroke:0.2px #fff;transform:scaleX(1.0382);transform-origin:0 0;-webkit-text-stroke:0;">OK</div>
</body></html>
